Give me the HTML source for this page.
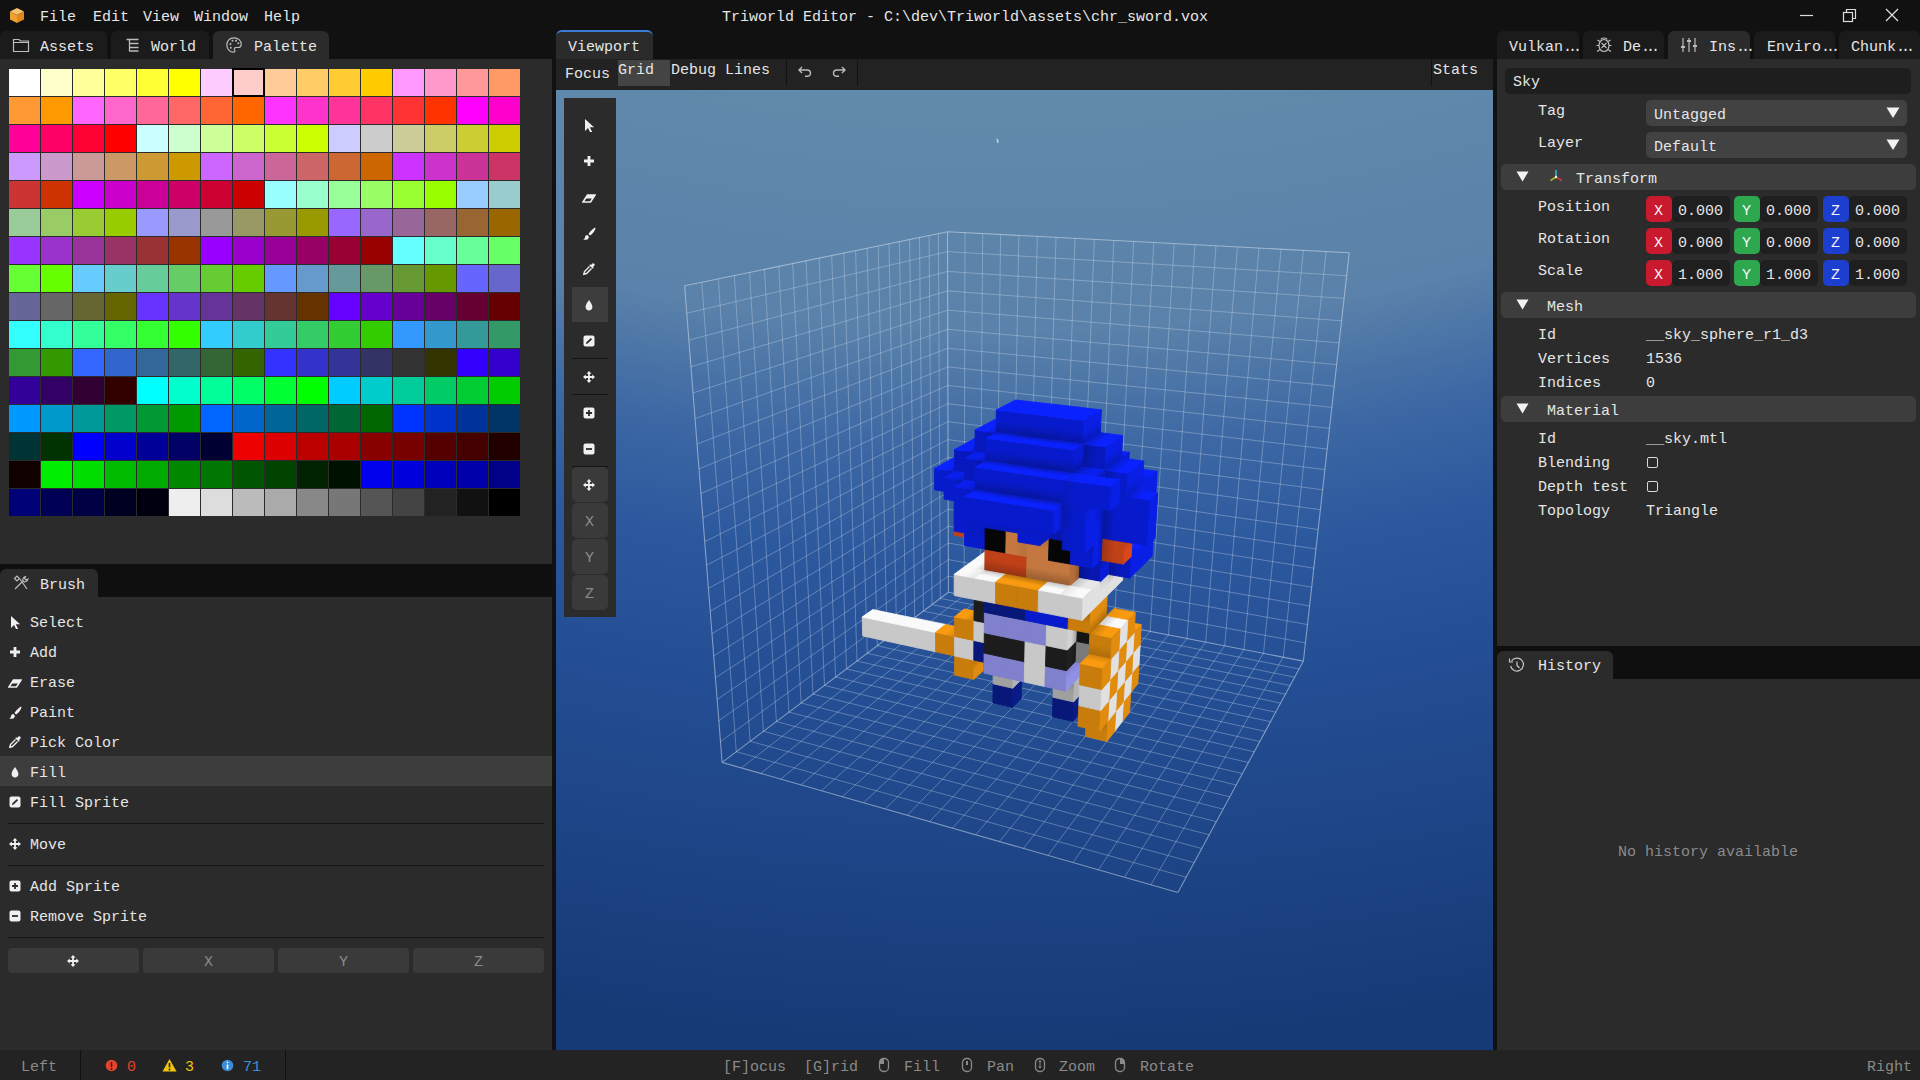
<!DOCTYPE html>
<html><head><meta charset="utf-8"><style>
html,body{margin:0;padding:0;width:1920px;height:1080px;overflow:hidden;background:#111111}
body>div,body>svg{position:absolute}
div{position:absolute}
.t{font:15px/20px "Liberation Mono",monospace;white-space:pre}
</style></head><body>
<svg style="position:absolute;left:9px;top:7px;" width="16" height="17" viewBox="0 0 16 17"><polygon points="8,1 15,4.5 8,8 1,4.5" fill="#f7c26a"/><polygon points="1,4.5 8,8 8,16 1,12.5" fill="#f0a030"/><polygon points="15,4.5 8,8 8,16 15,12.5" fill="#e08a18"/></svg>
<div class="t" style="left:40px;top:8px;color:#e6e6e6;">File</div>
<div class="t" style="left:93px;top:8px;color:#e6e6e6;">Edit</div>
<div class="t" style="left:143px;top:8px;color:#e6e6e6;">View</div>
<div class="t" style="left:194px;top:8px;color:#e6e6e6;">Window</div>
<div class="t" style="left:264px;top:8px;color:#e6e6e6;">Help</div>
<div class="t" style="left:722px;top:8px;color:#e6e6e6;">Triworld Editor - C:\dev\Triworld\assets\chr_sword.vox</div>
<svg style="position:absolute;left:1796px;top:6px;" width="20" height="20" viewBox="0 0 20 20"><line x1="4" y1="9.5" x2="17" y2="9.5" stroke="#ddd" stroke-width="1.2"/></svg>
<svg style="position:absolute;left:1839px;top:6px;" width="20" height="20" viewBox="0 0 20 20"><rect x="4.5" y="6.5" width="9" height="9" fill="none" stroke="#ddd" stroke-width="1.2"/><path d="M7.5 6.5 V3.5 H16.5 V12.5 H13.5" fill="none" stroke="#ddd" stroke-width="1.2"/></svg>
<svg style="position:absolute;left:1882px;top:6px;" width="20" height="20" viewBox="0 0 20 20"><path d="M4 3 L16 15 M16 3 L4 15" stroke="#ddd" stroke-width="1.3"/></svg>
<div style="left:0px;top:31px;width:107px;height:28px;background:#1b1b1b;border-radius:6px 6px 0 0;"></div>
<div style="left:111px;top:31px;width:98px;height:28px;background:#1b1b1b;border-radius:6px 6px 0 0;"></div>
<div style="left:213px;top:31px;width:116px;height:28px;background:#2b2b2b;border-radius:6px 6px 0 0;"></div>
<div style="left:0px;top:59px;width:552px;height:505px;background:#2b2b2b;"></div>
<svg style="position:absolute;left:12px;top:36px;" width="18" height="18" viewBox="0 0 18 18"><path d="M1.5 3.5 H7 L8.5 5 H16.5 V15.5 H1.5 Z M1.5 6.5 H16.5" fill="none" stroke="#bdbdbd" stroke-width="1.2"/></svg>
<div class="t" style="left:40px;top:38px;color:#e6e6e6;">Assets</div>
<svg style="position:absolute;left:124px;top:36px;" width="18" height="18" viewBox="0 0 18 18"><path d="M2.5 3.5 H14.5 M5.5 3.5 V15.5 M5.5 7.5 H14.5 M5.5 11.5 H14.5 M5.5 15 H14.5" fill="none" stroke="#bdbdbd" stroke-width="1.3"/></svg>
<div class="t" style="left:151px;top:38px;color:#e6e6e6;">World</div>
<svg style="position:absolute;left:225px;top:36px;" width="18" height="18" viewBox="0 0 18 18"><path d="M9 1.8 C4.5 1.8 1.8 5 1.8 9 C1.8 13 5 16.2 8.5 16.2 C10 16.2 10.3 15 9.6 14 C8.8 12.8 9.5 11.5 11 11.5 H13 C15 11.5 16.2 10.2 16.2 8.2 C16.2 4.6 13 1.8 9 1.8 Z" fill="none" stroke="#bdbdbd" stroke-width="1.2"/><circle cx="5.5" cy="8" r="1" fill="#bdbdbd"/><circle cx="7.5" cy="4.8" r="1" fill="#bdbdbd"/><circle cx="11" cy="4.8" r="1" fill="#bdbdbd"/><circle cx="13.3" cy="7.3" r="1" fill="#bdbdbd"/><circle cx="5.8" cy="11.8" r="1" fill="#bdbdbd"/></svg>
<div class="t" style="left:254px;top:38px;color:#e6e6e6;">Palette</div>
<div style="left:9px;top:69px;width:31px;height:27px;background:rgb(255,255,255)"></div><div style="left:41px;top:69px;width:31px;height:27px;background:rgb(255,255,204)"></div><div style="left:73px;top:69px;width:31px;height:27px;background:rgb(255,255,153)"></div><div style="left:105px;top:69px;width:31px;height:27px;background:rgb(255,255,102)"></div><div style="left:137px;top:69px;width:31px;height:27px;background:rgb(255,255,51)"></div><div style="left:169px;top:69px;width:31px;height:27px;background:rgb(255,255,0)"></div><div style="left:201px;top:69px;width:31px;height:27px;background:rgb(255,204,255)"></div><div style="left:233px;top:69px;width:31px;height:27px;background:rgb(255,204,204)"></div><div style="left:265px;top:69px;width:31px;height:27px;background:rgb(255,204,153)"></div><div style="left:297px;top:69px;width:31px;height:27px;background:rgb(255,204,102)"></div><div style="left:329px;top:69px;width:31px;height:27px;background:rgb(255,204,51)"></div><div style="left:361px;top:69px;width:31px;height:27px;background:rgb(255,204,0)"></div><div style="left:393px;top:69px;width:31px;height:27px;background:rgb(255,153,255)"></div><div style="left:425px;top:69px;width:31px;height:27px;background:rgb(255,153,204)"></div><div style="left:457px;top:69px;width:31px;height:27px;background:rgb(255,153,153)"></div><div style="left:489px;top:69px;width:31px;height:27px;background:rgb(255,153,102)"></div><div style="left:9px;top:97px;width:31px;height:27px;background:rgb(255,153,51)"></div><div style="left:41px;top:97px;width:31px;height:27px;background:rgb(255,153,0)"></div><div style="left:73px;top:97px;width:31px;height:27px;background:rgb(255,102,255)"></div><div style="left:105px;top:97px;width:31px;height:27px;background:rgb(255,102,204)"></div><div style="left:137px;top:97px;width:31px;height:27px;background:rgb(255,102,153)"></div><div style="left:169px;top:97px;width:31px;height:27px;background:rgb(255,102,102)"></div><div style="left:201px;top:97px;width:31px;height:27px;background:rgb(255,102,51)"></div><div style="left:233px;top:97px;width:31px;height:27px;background:rgb(255,102,0)"></div><div style="left:265px;top:97px;width:31px;height:27px;background:rgb(255,51,255)"></div><div style="left:297px;top:97px;width:31px;height:27px;background:rgb(255,51,204)"></div><div style="left:329px;top:97px;width:31px;height:27px;background:rgb(255,51,153)"></div><div style="left:361px;top:97px;width:31px;height:27px;background:rgb(255,51,102)"></div><div style="left:393px;top:97px;width:31px;height:27px;background:rgb(255,51,51)"></div><div style="left:425px;top:97px;width:31px;height:27px;background:rgb(255,51,0)"></div><div style="left:457px;top:97px;width:31px;height:27px;background:rgb(255,0,255)"></div><div style="left:489px;top:97px;width:31px;height:27px;background:rgb(255,0,204)"></div><div style="left:9px;top:125px;width:31px;height:27px;background:rgb(255,0,153)"></div><div style="left:41px;top:125px;width:31px;height:27px;background:rgb(255,0,102)"></div><div style="left:73px;top:125px;width:31px;height:27px;background:rgb(255,0,51)"></div><div style="left:105px;top:125px;width:31px;height:27px;background:rgb(255,0,0)"></div><div style="left:137px;top:125px;width:31px;height:27px;background:rgb(204,255,255)"></div><div style="left:169px;top:125px;width:31px;height:27px;background:rgb(204,255,204)"></div><div style="left:201px;top:125px;width:31px;height:27px;background:rgb(204,255,153)"></div><div style="left:233px;top:125px;width:31px;height:27px;background:rgb(204,255,102)"></div><div style="left:265px;top:125px;width:31px;height:27px;background:rgb(204,255,51)"></div><div style="left:297px;top:125px;width:31px;height:27px;background:rgb(204,255,0)"></div><div style="left:329px;top:125px;width:31px;height:27px;background:rgb(204,204,255)"></div><div style="left:361px;top:125px;width:31px;height:27px;background:rgb(204,204,204)"></div><div style="left:393px;top:125px;width:31px;height:27px;background:rgb(204,204,153)"></div><div style="left:425px;top:125px;width:31px;height:27px;background:rgb(204,204,102)"></div><div style="left:457px;top:125px;width:31px;height:27px;background:rgb(204,204,51)"></div><div style="left:489px;top:125px;width:31px;height:27px;background:rgb(204,204,0)"></div><div style="left:9px;top:153px;width:31px;height:27px;background:rgb(204,153,255)"></div><div style="left:41px;top:153px;width:31px;height:27px;background:rgb(204,153,204)"></div><div style="left:73px;top:153px;width:31px;height:27px;background:rgb(204,153,153)"></div><div style="left:105px;top:153px;width:31px;height:27px;background:rgb(204,153,102)"></div><div style="left:137px;top:153px;width:31px;height:27px;background:rgb(204,153,51)"></div><div style="left:169px;top:153px;width:31px;height:27px;background:rgb(204,153,0)"></div><div style="left:201px;top:153px;width:31px;height:27px;background:rgb(204,102,255)"></div><div style="left:233px;top:153px;width:31px;height:27px;background:rgb(204,102,204)"></div><div style="left:265px;top:153px;width:31px;height:27px;background:rgb(204,102,153)"></div><div style="left:297px;top:153px;width:31px;height:27px;background:rgb(204,102,102)"></div><div style="left:329px;top:153px;width:31px;height:27px;background:rgb(204,102,51)"></div><div style="left:361px;top:153px;width:31px;height:27px;background:rgb(204,102,0)"></div><div style="left:393px;top:153px;width:31px;height:27px;background:rgb(204,51,255)"></div><div style="left:425px;top:153px;width:31px;height:27px;background:rgb(204,51,204)"></div><div style="left:457px;top:153px;width:31px;height:27px;background:rgb(204,51,153)"></div><div style="left:489px;top:153px;width:31px;height:27px;background:rgb(204,51,102)"></div><div style="left:9px;top:181px;width:31px;height:27px;background:rgb(204,51,51)"></div><div style="left:41px;top:181px;width:31px;height:27px;background:rgb(204,51,0)"></div><div style="left:73px;top:181px;width:31px;height:27px;background:rgb(204,0,255)"></div><div style="left:105px;top:181px;width:31px;height:27px;background:rgb(204,0,204)"></div><div style="left:137px;top:181px;width:31px;height:27px;background:rgb(204,0,153)"></div><div style="left:169px;top:181px;width:31px;height:27px;background:rgb(204,0,102)"></div><div style="left:201px;top:181px;width:31px;height:27px;background:rgb(204,0,51)"></div><div style="left:233px;top:181px;width:31px;height:27px;background:rgb(204,0,0)"></div><div style="left:265px;top:181px;width:31px;height:27px;background:rgb(153,255,255)"></div><div style="left:297px;top:181px;width:31px;height:27px;background:rgb(153,255,204)"></div><div style="left:329px;top:181px;width:31px;height:27px;background:rgb(153,255,153)"></div><div style="left:361px;top:181px;width:31px;height:27px;background:rgb(153,255,102)"></div><div style="left:393px;top:181px;width:31px;height:27px;background:rgb(153,255,51)"></div><div style="left:425px;top:181px;width:31px;height:27px;background:rgb(153,255,0)"></div><div style="left:457px;top:181px;width:31px;height:27px;background:rgb(153,204,255)"></div><div style="left:489px;top:181px;width:31px;height:27px;background:rgb(153,204,204)"></div><div style="left:9px;top:209px;width:31px;height:27px;background:rgb(153,204,153)"></div><div style="left:41px;top:209px;width:31px;height:27px;background:rgb(153,204,102)"></div><div style="left:73px;top:209px;width:31px;height:27px;background:rgb(153,204,51)"></div><div style="left:105px;top:209px;width:31px;height:27px;background:rgb(153,204,0)"></div><div style="left:137px;top:209px;width:31px;height:27px;background:rgb(153,153,255)"></div><div style="left:169px;top:209px;width:31px;height:27px;background:rgb(153,153,204)"></div><div style="left:201px;top:209px;width:31px;height:27px;background:rgb(153,153,153)"></div><div style="left:233px;top:209px;width:31px;height:27px;background:rgb(153,153,102)"></div><div style="left:265px;top:209px;width:31px;height:27px;background:rgb(153,153,51)"></div><div style="left:297px;top:209px;width:31px;height:27px;background:rgb(153,153,0)"></div><div style="left:329px;top:209px;width:31px;height:27px;background:rgb(153,102,255)"></div><div style="left:361px;top:209px;width:31px;height:27px;background:rgb(153,102,204)"></div><div style="left:393px;top:209px;width:31px;height:27px;background:rgb(153,102,153)"></div><div style="left:425px;top:209px;width:31px;height:27px;background:rgb(153,102,102)"></div><div style="left:457px;top:209px;width:31px;height:27px;background:rgb(153,102,51)"></div><div style="left:489px;top:209px;width:31px;height:27px;background:rgb(153,102,0)"></div><div style="left:9px;top:237px;width:31px;height:27px;background:rgb(153,51,255)"></div><div style="left:41px;top:237px;width:31px;height:27px;background:rgb(153,51,204)"></div><div style="left:73px;top:237px;width:31px;height:27px;background:rgb(153,51,153)"></div><div style="left:105px;top:237px;width:31px;height:27px;background:rgb(153,51,102)"></div><div style="left:137px;top:237px;width:31px;height:27px;background:rgb(153,51,51)"></div><div style="left:169px;top:237px;width:31px;height:27px;background:rgb(153,51,0)"></div><div style="left:201px;top:237px;width:31px;height:27px;background:rgb(153,0,255)"></div><div style="left:233px;top:237px;width:31px;height:27px;background:rgb(153,0,204)"></div><div style="left:265px;top:237px;width:31px;height:27px;background:rgb(153,0,153)"></div><div style="left:297px;top:237px;width:31px;height:27px;background:rgb(153,0,102)"></div><div style="left:329px;top:237px;width:31px;height:27px;background:rgb(153,0,51)"></div><div style="left:361px;top:237px;width:31px;height:27px;background:rgb(153,0,0)"></div><div style="left:393px;top:237px;width:31px;height:27px;background:rgb(102,255,255)"></div><div style="left:425px;top:237px;width:31px;height:27px;background:rgb(102,255,204)"></div><div style="left:457px;top:237px;width:31px;height:27px;background:rgb(102,255,153)"></div><div style="left:489px;top:237px;width:31px;height:27px;background:rgb(102,255,102)"></div><div style="left:9px;top:265px;width:31px;height:27px;background:rgb(102,255,51)"></div><div style="left:41px;top:265px;width:31px;height:27px;background:rgb(102,255,0)"></div><div style="left:73px;top:265px;width:31px;height:27px;background:rgb(102,204,255)"></div><div style="left:105px;top:265px;width:31px;height:27px;background:rgb(102,204,204)"></div><div style="left:137px;top:265px;width:31px;height:27px;background:rgb(102,204,153)"></div><div style="left:169px;top:265px;width:31px;height:27px;background:rgb(102,204,102)"></div><div style="left:201px;top:265px;width:31px;height:27px;background:rgb(102,204,51)"></div><div style="left:233px;top:265px;width:31px;height:27px;background:rgb(102,204,0)"></div><div style="left:265px;top:265px;width:31px;height:27px;background:rgb(102,153,255)"></div><div style="left:297px;top:265px;width:31px;height:27px;background:rgb(102,153,204)"></div><div style="left:329px;top:265px;width:31px;height:27px;background:rgb(102,153,153)"></div><div style="left:361px;top:265px;width:31px;height:27px;background:rgb(102,153,102)"></div><div style="left:393px;top:265px;width:31px;height:27px;background:rgb(102,153,51)"></div><div style="left:425px;top:265px;width:31px;height:27px;background:rgb(102,153,0)"></div><div style="left:457px;top:265px;width:31px;height:27px;background:rgb(102,102,255)"></div><div style="left:489px;top:265px;width:31px;height:27px;background:rgb(102,102,204)"></div><div style="left:9px;top:293px;width:31px;height:27px;background:rgb(102,102,153)"></div><div style="left:41px;top:293px;width:31px;height:27px;background:rgb(102,102,102)"></div><div style="left:73px;top:293px;width:31px;height:27px;background:rgb(102,102,51)"></div><div style="left:105px;top:293px;width:31px;height:27px;background:rgb(102,102,0)"></div><div style="left:137px;top:293px;width:31px;height:27px;background:rgb(102,51,255)"></div><div style="left:169px;top:293px;width:31px;height:27px;background:rgb(102,51,204)"></div><div style="left:201px;top:293px;width:31px;height:27px;background:rgb(102,51,153)"></div><div style="left:233px;top:293px;width:31px;height:27px;background:rgb(102,51,102)"></div><div style="left:265px;top:293px;width:31px;height:27px;background:rgb(102,51,51)"></div><div style="left:297px;top:293px;width:31px;height:27px;background:rgb(102,51,0)"></div><div style="left:329px;top:293px;width:31px;height:27px;background:rgb(102,0,255)"></div><div style="left:361px;top:293px;width:31px;height:27px;background:rgb(102,0,204)"></div><div style="left:393px;top:293px;width:31px;height:27px;background:rgb(102,0,153)"></div><div style="left:425px;top:293px;width:31px;height:27px;background:rgb(102,0,102)"></div><div style="left:457px;top:293px;width:31px;height:27px;background:rgb(102,0,51)"></div><div style="left:489px;top:293px;width:31px;height:27px;background:rgb(102,0,0)"></div><div style="left:9px;top:321px;width:31px;height:27px;background:rgb(51,255,255)"></div><div style="left:41px;top:321px;width:31px;height:27px;background:rgb(51,255,204)"></div><div style="left:73px;top:321px;width:31px;height:27px;background:rgb(51,255,153)"></div><div style="left:105px;top:321px;width:31px;height:27px;background:rgb(51,255,102)"></div><div style="left:137px;top:321px;width:31px;height:27px;background:rgb(51,255,51)"></div><div style="left:169px;top:321px;width:31px;height:27px;background:rgb(51,255,0)"></div><div style="left:201px;top:321px;width:31px;height:27px;background:rgb(51,204,255)"></div><div style="left:233px;top:321px;width:31px;height:27px;background:rgb(51,204,204)"></div><div style="left:265px;top:321px;width:31px;height:27px;background:rgb(51,204,153)"></div><div style="left:297px;top:321px;width:31px;height:27px;background:rgb(51,204,102)"></div><div style="left:329px;top:321px;width:31px;height:27px;background:rgb(51,204,51)"></div><div style="left:361px;top:321px;width:31px;height:27px;background:rgb(51,204,0)"></div><div style="left:393px;top:321px;width:31px;height:27px;background:rgb(51,153,255)"></div><div style="left:425px;top:321px;width:31px;height:27px;background:rgb(51,153,204)"></div><div style="left:457px;top:321px;width:31px;height:27px;background:rgb(51,153,153)"></div><div style="left:489px;top:321px;width:31px;height:27px;background:rgb(51,153,102)"></div><div style="left:9px;top:349px;width:31px;height:27px;background:rgb(51,153,51)"></div><div style="left:41px;top:349px;width:31px;height:27px;background:rgb(51,153,0)"></div><div style="left:73px;top:349px;width:31px;height:27px;background:rgb(51,102,255)"></div><div style="left:105px;top:349px;width:31px;height:27px;background:rgb(51,102,204)"></div><div style="left:137px;top:349px;width:31px;height:27px;background:rgb(51,102,153)"></div><div style="left:169px;top:349px;width:31px;height:27px;background:rgb(51,102,102)"></div><div style="left:201px;top:349px;width:31px;height:27px;background:rgb(51,102,51)"></div><div style="left:233px;top:349px;width:31px;height:27px;background:rgb(51,102,0)"></div><div style="left:265px;top:349px;width:31px;height:27px;background:rgb(51,51,255)"></div><div style="left:297px;top:349px;width:31px;height:27px;background:rgb(51,51,204)"></div><div style="left:329px;top:349px;width:31px;height:27px;background:rgb(51,51,153)"></div><div style="left:361px;top:349px;width:31px;height:27px;background:rgb(51,51,102)"></div><div style="left:393px;top:349px;width:31px;height:27px;background:rgb(51,51,51)"></div><div style="left:425px;top:349px;width:31px;height:27px;background:rgb(51,51,0)"></div><div style="left:457px;top:349px;width:31px;height:27px;background:rgb(51,0,255)"></div><div style="left:489px;top:349px;width:31px;height:27px;background:rgb(51,0,204)"></div><div style="left:9px;top:377px;width:31px;height:27px;background:rgb(51,0,153)"></div><div style="left:41px;top:377px;width:31px;height:27px;background:rgb(51,0,102)"></div><div style="left:73px;top:377px;width:31px;height:27px;background:rgb(51,0,51)"></div><div style="left:105px;top:377px;width:31px;height:27px;background:rgb(51,0,0)"></div><div style="left:137px;top:377px;width:31px;height:27px;background:rgb(0,255,255)"></div><div style="left:169px;top:377px;width:31px;height:27px;background:rgb(0,255,204)"></div><div style="left:201px;top:377px;width:31px;height:27px;background:rgb(0,255,153)"></div><div style="left:233px;top:377px;width:31px;height:27px;background:rgb(0,255,102)"></div><div style="left:265px;top:377px;width:31px;height:27px;background:rgb(0,255,51)"></div><div style="left:297px;top:377px;width:31px;height:27px;background:rgb(0,255,0)"></div><div style="left:329px;top:377px;width:31px;height:27px;background:rgb(0,204,255)"></div><div style="left:361px;top:377px;width:31px;height:27px;background:rgb(0,204,204)"></div><div style="left:393px;top:377px;width:31px;height:27px;background:rgb(0,204,153)"></div><div style="left:425px;top:377px;width:31px;height:27px;background:rgb(0,204,102)"></div><div style="left:457px;top:377px;width:31px;height:27px;background:rgb(0,204,51)"></div><div style="left:489px;top:377px;width:31px;height:27px;background:rgb(0,204,0)"></div><div style="left:9px;top:405px;width:31px;height:27px;background:rgb(0,153,255)"></div><div style="left:41px;top:405px;width:31px;height:27px;background:rgb(0,153,204)"></div><div style="left:73px;top:405px;width:31px;height:27px;background:rgb(0,153,153)"></div><div style="left:105px;top:405px;width:31px;height:27px;background:rgb(0,153,102)"></div><div style="left:137px;top:405px;width:31px;height:27px;background:rgb(0,153,51)"></div><div style="left:169px;top:405px;width:31px;height:27px;background:rgb(0,153,0)"></div><div style="left:201px;top:405px;width:31px;height:27px;background:rgb(0,102,255)"></div><div style="left:233px;top:405px;width:31px;height:27px;background:rgb(0,102,204)"></div><div style="left:265px;top:405px;width:31px;height:27px;background:rgb(0,102,153)"></div><div style="left:297px;top:405px;width:31px;height:27px;background:rgb(0,102,102)"></div><div style="left:329px;top:405px;width:31px;height:27px;background:rgb(0,102,51)"></div><div style="left:361px;top:405px;width:31px;height:27px;background:rgb(0,102,0)"></div><div style="left:393px;top:405px;width:31px;height:27px;background:rgb(0,51,255)"></div><div style="left:425px;top:405px;width:31px;height:27px;background:rgb(0,51,204)"></div><div style="left:457px;top:405px;width:31px;height:27px;background:rgb(0,51,153)"></div><div style="left:489px;top:405px;width:31px;height:27px;background:rgb(0,51,102)"></div><div style="left:9px;top:433px;width:31px;height:27px;background:rgb(0,51,51)"></div><div style="left:41px;top:433px;width:31px;height:27px;background:rgb(0,51,0)"></div><div style="left:73px;top:433px;width:31px;height:27px;background:rgb(0,0,255)"></div><div style="left:105px;top:433px;width:31px;height:27px;background:rgb(0,0,204)"></div><div style="left:137px;top:433px;width:31px;height:27px;background:rgb(0,0,153)"></div><div style="left:169px;top:433px;width:31px;height:27px;background:rgb(0,0,102)"></div><div style="left:201px;top:433px;width:31px;height:27px;background:rgb(0,0,51)"></div><div style="left:233px;top:433px;width:31px;height:27px;background:rgb(238,0,0)"></div><div style="left:265px;top:433px;width:31px;height:27px;background:rgb(221,0,0)"></div><div style="left:297px;top:433px;width:31px;height:27px;background:rgb(187,0,0)"></div><div style="left:329px;top:433px;width:31px;height:27px;background:rgb(170,0,0)"></div><div style="left:361px;top:433px;width:31px;height:27px;background:rgb(136,0,0)"></div><div style="left:393px;top:433px;width:31px;height:27px;background:rgb(119,0,0)"></div><div style="left:425px;top:433px;width:31px;height:27px;background:rgb(85,0,0)"></div><div style="left:457px;top:433px;width:31px;height:27px;background:rgb(68,0,0)"></div><div style="left:489px;top:433px;width:31px;height:27px;background:rgb(34,0,0)"></div><div style="left:9px;top:461px;width:31px;height:27px;background:rgb(17,0,0)"></div><div style="left:41px;top:461px;width:31px;height:27px;background:rgb(0,238,0)"></div><div style="left:73px;top:461px;width:31px;height:27px;background:rgb(0,221,0)"></div><div style="left:105px;top:461px;width:31px;height:27px;background:rgb(0,187,0)"></div><div style="left:137px;top:461px;width:31px;height:27px;background:rgb(0,170,0)"></div><div style="left:169px;top:461px;width:31px;height:27px;background:rgb(0,136,0)"></div><div style="left:201px;top:461px;width:31px;height:27px;background:rgb(0,119,0)"></div><div style="left:233px;top:461px;width:31px;height:27px;background:rgb(0,85,0)"></div><div style="left:265px;top:461px;width:31px;height:27px;background:rgb(0,68,0)"></div><div style="left:297px;top:461px;width:31px;height:27px;background:rgb(0,34,0)"></div><div style="left:329px;top:461px;width:31px;height:27px;background:rgb(0,17,0)"></div><div style="left:361px;top:461px;width:31px;height:27px;background:rgb(0,0,238)"></div><div style="left:393px;top:461px;width:31px;height:27px;background:rgb(0,0,221)"></div><div style="left:425px;top:461px;width:31px;height:27px;background:rgb(0,0,187)"></div><div style="left:457px;top:461px;width:31px;height:27px;background:rgb(0,0,170)"></div><div style="left:489px;top:461px;width:31px;height:27px;background:rgb(0,0,136)"></div><div style="left:9px;top:489px;width:31px;height:27px;background:rgb(0,0,119)"></div><div style="left:41px;top:489px;width:31px;height:27px;background:rgb(0,0,85)"></div><div style="left:73px;top:489px;width:31px;height:27px;background:rgb(0,0,68)"></div><div style="left:105px;top:489px;width:31px;height:27px;background:rgb(0,0,34)"></div><div style="left:137px;top:489px;width:31px;height:27px;background:rgb(0,0,17)"></div><div style="left:169px;top:489px;width:31px;height:27px;background:rgb(238,238,238)"></div><div style="left:201px;top:489px;width:31px;height:27px;background:rgb(221,221,221)"></div><div style="left:233px;top:489px;width:31px;height:27px;background:rgb(187,187,187)"></div><div style="left:265px;top:489px;width:31px;height:27px;background:rgb(170,170,170)"></div><div style="left:297px;top:489px;width:31px;height:27px;background:rgb(136,136,136)"></div><div style="left:329px;top:489px;width:31px;height:27px;background:rgb(119,119,119)"></div><div style="left:361px;top:489px;width:31px;height:27px;background:rgb(85,85,85)"></div><div style="left:393px;top:489px;width:31px;height:27px;background:rgb(68,68,68)"></div><div style="left:425px;top:489px;width:31px;height:27px;background:rgb(34,34,34)"></div><div style="left:457px;top:489px;width:31px;height:27px;background:rgb(17,17,17)"></div><div style="left:489px;top:489px;width:31px;height:27px;background:rgb(0,0,0)"></div>
<div style="left:232px;top:68px;width:33px;height:29px;box-sizing:border-box;border:2px solid #000"></div>
<div style="left:0px;top:564px;width:552px;height:33px;background:#0f0f0f;"></div>
<div style="left:0px;top:569px;width:98px;height:28px;background:#2b2b2b;border-radius:6px 6px 0 0;"></div>
<div style="left:0px;top:597px;width:552px;height:453px;background:#2b2b2b;"></div>
<svg style="position:absolute;left:12px;top:574px;" width="18" height="18" viewBox="0 0 18 18"><path d="M3 15 L10.5 7.5 M8 5 L15 15 M2.5 4.5 L5 2 L7.5 4.5 L5 7 Z M11.5 7.5 C10 6 11 3 13.5 2.5 L12.5 4.5 L14 6 L16 5 C15.5 7.5 13 8.5 11.5 7.5 Z" fill="none" stroke="#bdbdbd" stroke-width="1.2"/></svg>
<div class="t" style="left:40px;top:576px;color:#e6e6e6;">Brush</div>
<div style="left:0px;top:756px;width:552px;height:30px;background:#3d3d3d;"></div>
<svg style="position:absolute;left:8px;top:615px;" width="14" height="14" viewBox="0 0 14 14"><path d="M3 1 L3 13 L6 10 L8.5 15 L10.3 14.2 L7.8 9.3 L12 9.3 Z" fill="#f0f0f0"/></svg>
<div class="t" style="left:30px;top:614px;color:#e6e6e6;">Select</div>
<svg style="position:absolute;left:8px;top:645px;" width="14" height="14" viewBox="0 0 14 14"><path d="M7 2 V12 M2 7 H12" stroke="#f0f0f0" stroke-width="2.8"/></svg>
<div class="t" style="left:30px;top:644px;color:#e6e6e6;">Add</div>
<svg style="position:absolute;left:8px;top:675px;" width="14" height="14" viewBox="0 0 14 14"><path d="M1 12 L5.5 5 H13 L8.5 12 Z" fill="none" stroke="#f0f0f0" stroke-width="1.6"/><path d="M3.2 8.6 L5.5 5 H13 L10.7 8.6 Z" fill="#f0f0f0"/></svg>
<div class="t" style="left:30px;top:674px;color:#e6e6e6;">Erase</div>
<svg style="position:absolute;left:8px;top:705px;" width="14" height="14" viewBox="0 0 14 14"><path d="M13 1.5 C11 2.5 7.5 6 6.5 8 L8 9.5 C10 8.5 13 5 13.5 2 Z" fill="#f0f0f0"/><path d="M5.5 9 C3.5 9 3 10.5 2.8 12 C2.6 13 1.8 13.2 1 13.2 C3 14.5 6.5 14 7 11 Z" fill="#f0f0f0"/></svg>
<div class="t" style="left:30px;top:704px;color:#e6e6e6;">Paint</div>
<svg style="position:absolute;left:8px;top:735px;" width="14" height="14" viewBox="0 0 14 14"><path d="M10.5 1.5 C11.5 0.5 13.5 2.5 12.5 3.5 L11 5 L11.8 5.8 L10.8 6.8 L7.2 3.2 L8.2 2.2 L9 3 Z" fill="#f0f0f0"/><path d="M7.5 4.5 L2.5 9.5 L1.8 12.2 L4.5 11.5 L9.5 6.5" fill="none" stroke="#f0f0f0" stroke-width="1.4"/></svg>
<div class="t" style="left:30px;top:734px;color:#e6e6e6;">Pick Color</div>
<svg style="position:absolute;left:8px;top:765px;" width="14" height="14" viewBox="0 0 14 14"><path d="M7 2 C5 5 3.6 6.8 3.6 9 C3.6 11 5.2 12.5 7 12.5 C8.8 12.5 10.4 11 10.4 9 C10.4 6.8 9 5 7 2 Z" fill="#f0f0f0"/></svg>
<div class="t" style="left:30px;top:764px;color:#e6e6e6;">Fill</div>
<svg style="position:absolute;left:8px;top:795px;" width="14" height="14" viewBox="0 0 14 14"><rect x="1.5" y="1.5" width="11" height="11" rx="2" fill="#f0f0f0"/><path d="M4 10 L4.4 8.3 L8.8 3.9 L10.1 5.2 L5.7 9.6 Z" fill="#2b2b2b"/></svg>
<div class="t" style="left:30px;top:794px;color:#e6e6e6;">Fill Sprite</div>
<svg style="position:absolute;left:8px;top:837px;" width="14" height="14" viewBox="0 0 14 14"><path d="M7 1 L9.5 3.8 H7.9 V6.1 H10.2 V4.5 L13 7 L10.2 9.5 V7.9 H7.9 V10.2 H9.5 L7 13 L4.5 10.2 H6.1 V7.9 H3.8 V9.5 L1 7 L3.8 4.5 V6.1 H6.1 V3.8 H4.5 Z" fill="#f0f0f0"/></svg>
<div class="t" style="left:30px;top:836px;color:#e6e6e6;">Move</div>
<svg style="position:absolute;left:8px;top:879px;" width="14" height="14" viewBox="0 0 14 14"><rect x="1.5" y="1.5" width="11" height="11" rx="2" fill="#f0f0f0"/><path d="M7 4 V10 M4 7 H10" stroke="#2b2b2b" stroke-width="1.8"/></svg>
<div class="t" style="left:30px;top:878px;color:#e6e6e6;">Add Sprite</div>
<svg style="position:absolute;left:8px;top:909px;" width="14" height="14" viewBox="0 0 14 14"><rect x="1.5" y="1.5" width="11" height="11" rx="2" fill="#f0f0f0"/><path d="M4 7 H10" stroke="#2b2b2b" stroke-width="1.8"/></svg>
<div class="t" style="left:30px;top:908px;color:#e6e6e6;">Remove Sprite</div>
<div style="left:8px;top:823px;width:536px;height:1px;background:#141414;"></div>
<div style="left:8px;top:865px;width:536px;height:1px;background:#141414;"></div>
<div style="left:8px;top:937px;width:536px;height:1px;background:#141414;"></div>
<div style="left:8px;top:948px;width:131px;height:25px;background:#3a3a3a;border-radius:4px"></div>
<div style="left:143px;top:948px;width:131px;height:25px;background:#3a3a3a;border-radius:4px"></div>
<div class="t" style="left:204px;top:953px;color:#8c8c8c;">X</div>
<div style="left:278px;top:948px;width:131px;height:25px;background:#3a3a3a;border-radius:4px"></div>
<div class="t" style="left:339px;top:953px;color:#8c8c8c;">Y</div>
<div style="left:413px;top:948px;width:131px;height:25px;background:#3a3a3a;border-radius:4px"></div>
<div class="t" style="left:474px;top:953px;color:#8c8c8c;">Z</div>
<svg style="position:absolute;left:66px;top:954px;" width="14" height="14" viewBox="0 0 14 14"><path d="M7 1 L9.5 3.8 H7.9 V6.1 H10.2 V4.5 L13 7 L10.2 9.5 V7.9 H7.9 V10.2 H9.5 L7 13 L4.5 10.2 H6.1 V7.9 H3.8 V9.5 L1 7 L3.8 4.5 V6.1 H6.1 V3.8 H4.5 Z" fill="#f0f0f0"/></svg>
<div style="left:556px;top:30px;width:97px;height:29px;background:#2b2b2b;border-radius:6px 6px 0 0;"></div>
<div style="left:556px;top:30px;width:97px;height:29px;border-top:2px solid #3a7bd5;border-radius:6px 6px 0 0;box-sizing:border-box"></div>
<div class="t" style="left:568px;top:38px;color:#e6e6e6;">Viewport</div>
<div style="left:556px;top:59px;width:937px;height:31px;background:#222222;"></div>
<div style="left:618px;top:60px;width:52px;height:26px;background:#444444;"></div>
<div class="t" style="left:565px;top:65px;color:#e6e6e6;">Focus</div>
<div class="t" style="left:618px;top:61px;color:#e6e6e6;">Grid</div>
<div class="t" style="left:671px;top:61px;color:#e6e6e6;">Debug Lines</div>
<div style="left:786px;top:60px;width:1px;height:26px;background:#111111;"></div>
<div style="left:857px;top:60px;width:1px;height:26px;background:#111111;"></div>
<div style="left:1431px;top:60px;width:1px;height:26px;background:#111111;"></div>
<svg style="position:absolute;left:797px;top:63px;" width="16" height="16" viewBox="0 0 16 16"><path d="M5 4 L2 7 L5 10 M2.5 7 H10 C12.2 7 13.5 8.5 13.5 10.3 C13.5 12 12.2 13.3 10 13.3 H8" fill="none" stroke="#bbb" stroke-width="1.4"/></svg>
<svg style="position:absolute;left:831px;top:63px;" width="16" height="16" viewBox="0 0 16 16"><path d="M11 4 L14 7 L11 10 M13.5 7 H6 C3.8 7 2.5 8.5 2.5 10.3 C2.5 12 3.8 13.3 6 13.3 H8" fill="none" stroke="#bbb" stroke-width="1.4"/></svg>
<div class="t" style="left:1433px;top:61px;color:#e6e6e6;">Stats</div>
<svg style="position:absolute;left:556px;top:90px" width="937" height="960" viewBox="0 0 937 960"><defs><radialGradient id="sky" gradientUnits="userSpaceOnUse" cx="454" cy="-1500" r="2600"><stop offset="0.577" stop-color="#628aac"/><stop offset="0.669" stop-color="#5a82aa"/><stop offset="0.715" stop-color="#3d68a4"/><stop offset="0.758" stop-color="#2c589e"/><stop offset="0.812" stop-color="#244e94"/><stop offset="0.944" stop-color="#163a76"/></radialGradient></defs><rect width="937" height="960" fill="url(#sky)"/><path d="M384.3 508.4L382.4 143.5M376.0 514.7L373.1 145.4M367.4 521.1L363.5 147.4M358.7 527.7L353.6 149.5M349.7 534.5L343.4 151.5M340.5 541.4L333.0 153.7M331.0 548.5L322.2 155.9M321.3 555.8L311.1 158.2M311.3 563.3L299.6 160.6M301.0 571.0L287.8 163.0M290.5 578.9L275.7 165.5M279.6 587.1L263.1 168.1M268.5 595.5L250.1 170.8M257.0 604.1L236.7 173.5M245.1 613.0L222.8 176.4M232.9 622.1L208.5 179.3M220.4 631.6L193.6 182.4M207.4 641.3L178.3 185.5M194.1 651.3L162.3 188.8M180.3 661.7L145.8 192.2M392.4 486.1L164.4 651.7M392.4 469.6L162.8 630.7M392.3 453.0L161.1 609.4M392.3 436.2L159.4 587.8M392.2 419.3L157.7 565.9M392.2 402.1L156.0 543.7M392.1 384.8L154.2 521.2M392.1 367.3L152.4 498.4M392.0 349.6L150.6 475.2M392.0 331.7L148.7 451.6M391.9 313.7L146.9 427.8M391.9 295.4L145.0 403.5M391.8 276.9L143.0 378.9M391.8 258.2L141.1 354.0M391.7 239.3L139.1 328.6M391.7 220.2L137.1 302.9M391.6 200.9L135.0 276.7M391.6 181.4L132.9 250.1M391.5 161.6L130.8 223.2M408.1 505.4L409.0 142.6M424.0 508.5L426.7 143.5M440.1 511.6L444.6 144.5M456.3 514.7L462.8 145.4M472.8 517.9L481.3 146.4M489.5 521.1L500.0 147.4M506.4 524.4L519.0 148.4M523.5 527.7L538.3 149.4M540.8 531.1L557.9 150.4M558.4 534.5L577.7 151.5M576.2 537.9L597.8 152.5M594.2 541.4L618.2 153.6M612.5 544.9L639.0 154.7M631.0 548.5L660.0 155.8M649.7 552.2L681.4 156.9M668.7 555.8L703.0 158.0M688.0 559.6L725.1 159.2M707.5 563.4L747.4 160.4M727.3 567.2L770.1 161.6M392.4 486.1L749.4 552.9M392.4 469.6L751.5 534.6M392.3 453.0L753.6 516.0M392.3 436.2L755.7 497.2M392.2 419.3L757.8 478.2M392.2 402.1L760.0 459.0M392.1 384.8L762.2 439.5M392.1 367.3L764.4 419.7M392.0 349.6L766.6 399.8M392.0 331.7L768.9 379.6M391.9 313.7L771.2 359.1M391.9 295.4L773.5 338.4M391.8 276.9L775.8 317.4M391.8 258.2L778.2 296.2M391.7 239.3L780.6 274.6M391.7 220.2L783.1 252.9M391.6 200.9L785.6 230.8M391.6 181.4L788.1 208.4M391.5 161.6L790.6 185.7M384.3 508.4L743.1 579.0M376.0 514.7L738.7 587.2M367.4 521.1L734.1 595.5M358.7 527.7L729.5 604.2M349.7 534.5L724.6 613.1M340.5 541.4L719.7 622.2M331.0 548.5L714.5 631.7M321.3 555.8L709.3 641.4M311.3 563.3L703.8 651.5M301.0 571.0L698.2 661.8M290.5 578.9L692.4 672.5M279.6 587.1L686.4 683.6M268.5 595.5L680.2 695.0M257.0 604.1L673.8 706.8M245.1 613.0L667.1 719.1M232.9 622.1L660.3 731.7M220.4 631.6L653.2 744.8M207.4 641.3L645.8 758.5M194.1 651.3L638.1 772.6M180.3 661.7L630.2 787.2M408.1 505.4L185.3 677.9M424.0 508.5L204.8 683.4M440.1 511.6L224.7 689.1M456.3 514.7L244.9 694.9M472.8 517.9L265.4 700.7M489.5 521.1L286.4 706.7M506.4 524.4L307.6 712.8M523.5 527.7L329.3 718.9M540.8 531.1L351.3 725.2M558.4 534.5L373.7 731.6M576.2 537.9L396.5 738.1M594.2 541.4L419.7 744.8M612.5 544.9L443.4 751.5M631.0 548.5L467.5 758.4M649.7 552.2L492.0 765.4M668.7 555.8L517.0 772.5M688.0 559.6L542.5 779.8M707.5 563.4L568.5 787.2M727.3 567.2L594.9 794.8" stroke="#d4e0ee" stroke-opacity="0.34" stroke-width="1" fill="none"/><path d="M392.4 502.3L391.5 141.7M166.1 672.4L128.6 195.8M392.4 502.3L166.1 672.4M391.5 141.7L128.6 195.8M392.4 502.3L391.5 141.7M747.4 571.1L793.2 162.8M392.4 502.3L747.4 571.1M391.5 141.7L793.2 162.8M392.4 502.3L747.4 571.1M166.1 672.4L621.9 802.5M392.4 502.3L166.1 672.4M747.4 571.1L621.9 802.5" stroke="#dde8f2" stroke-opacity="0.5" stroke-width="1.1" fill="none"/><path d="M440.5 48 L442.5 50 L442.5 53 L441 53 Z" fill="#b0d6e0"/><defs><linearGradient id="a1" gradientUnits="userSpaceOnUse" x1="441.4" y1="492.1" x2="450.6" y2="503.7"><stop offset="0.45" stop-color="#0a1e96"/><stop offset="1" stop-color="#08187a"/></linearGradient><linearGradient id="a2" gradientUnits="userSpaceOnUse" x1="422.4" y1="585.2" x2="412.8" y2="574.8"><stop offset="0.45" stop-color="#e18c0e"/><stop offset="1" stop-color="#b6710b"/></linearGradient><linearGradient id="a3" gradientUnits="userSpaceOnUse" x1="384.5" y1="538.5" x2="393.8" y2="550.1"><stop offset="0.45" stop-color="#fa9b0f"/><stop offset="1" stop-color="#d7850d"/></linearGradient><linearGradient id="a4" gradientUnits="userSpaceOnUse" x1="413.3" y1="359.2" x2="418.9" y2="369.3"><stop offset="0.45" stop-color="#0a22ff"/><stop offset="1" stop-color="#0920ed"/></linearGradient><linearGradient id="a5" gradientUnits="userSpaceOnUse" x1="441.9" y1="452.4" x2="450.3" y2="463.9"><stop offset="0.45" stop-color="#fafafa"/><stop offset="1" stop-color="#bebebe"/></linearGradient><linearGradient id="a6" gradientUnits="userSpaceOnUse" x1="437.8" y1="365.8" x2="438.7" y2="359.3"><stop offset="0" stop-color="#081ccf"/><stop offset="0.55" stop-color="#0a22ff"/></linearGradient><linearGradient id="a7" gradientUnits="userSpaceOnUse" x1="447.2" y1="576.5" x2="443.1" y2="595.2"><stop offset="0" stop-color="#828282"/><stop offset="0.55" stop-color="#a0a0a0"/></linearGradient><linearGradient id="a8" gradientUnits="userSpaceOnUse" x1="461.2" y1="593.8" x2="451.6" y2="584.2"><stop offset="0.45" stop-color="#b4b4b4"/><stop offset="1" stop-color="#898989"/></linearGradient><linearGradient id="a9" gradientUnits="userSpaceOnUse" x1="432.3" y1="499.3" x2="441.7" y2="511.1"><stop offset="0.45" stop-color="#0a1e96"/><stop offset="1" stop-color="#081772"/></linearGradient><linearGradient id="a10" gradientUnits="userSpaceOnUse" x1="417.9" y1="560.3" x2="437.5" y2="560.4"><stop offset="0.45" stop-color="#081878"/><stop offset="1" stop-color="#061361"/></linearGradient><linearGradient id="a11" gradientUnits="userSpaceOnUse" x1="403.4" y1="522.9" x2="412.8" y2="534.7"><stop offset="0.45" stop-color="#fa9b0f"/><stop offset="1" stop-color="#ca7e0c"/></linearGradient><linearGradient id="a12" gradientUnits="userSpaceOnUse" x1="457.6" y1="368.5" x2="458.5" y2="362.0"><stop offset="0" stop-color="#081ac2"/><stop offset="0.55" stop-color="#0a22ff"/></linearGradient><linearGradient id="a13" gradientUnits="userSpaceOnUse" x1="403.7" y1="364.5" x2="409.4" y2="374.8"><stop offset="0.45" stop-color="#0a22ff"/><stop offset="1" stop-color="#081ccf"/></linearGradient><linearGradient id="a14" gradientUnits="userSpaceOnUse" x1="418.0" y1="540.6" x2="437.7" y2="540.7"><stop offset="0.45" stop-color="#c8c8c8"/><stop offset="1" stop-color="#989898"/></linearGradient><linearGradient id="a15" gradientUnits="userSpaceOnUse" x1="530.5" y1="578.7" x2="521.0" y2="570.1"><stop offset="0.45" stop-color="#9090e6"/><stop offset="1" stop-color="#8686d5"/></linearGradient><linearGradient id="a16" gradientUnits="userSpaceOnUse" x1="477.7" y1="371.3" x2="478.6" y2="364.7"><stop offset="0" stop-color="#081ac2"/><stop offset="0.55" stop-color="#0a22ff"/></linearGradient><linearGradient id="a17" gradientUnits="userSpaceOnUse" x1="432.7" y1="459.1" x2="441.2" y2="470.8"><stop offset="0.45" stop-color="#fafafa"/><stop offset="1" stop-color="#bebebe"/></linearGradient><linearGradient id="a18" gradientUnits="userSpaceOnUse" x1="567.5" y1="540.8" x2="569.3" y2="531.6"><stop offset="0" stop-color="#d7850d"/><stop offset="0.55" stop-color="#fa9b0f"/></linearGradient><linearGradient id="a19" gradientUnits="userSpaceOnUse" x1="418.1" y1="520.6" x2="437.9" y2="520.7"><stop offset="0.45" stop-color="#1c1c1c"/><stop offset="1" stop-color="#151515"/></linearGradient><linearGradient id="a20" gradientUnits="userSpaceOnUse" x1="422.9" y1="506.8" x2="432.4" y2="518.7"><stop offset="0.45" stop-color="#232323"/><stop offset="1" stop-color="#1b1b1b"/></linearGradient><linearGradient id="a21" gradientUnits="userSpaceOnUse" x1="540.9" y1="510.6" x2="531.2" y2="500.7"><stop offset="0.45" stop-color="#091fe6"/><stop offset="1" stop-color="#0719ba"/></linearGradient><linearGradient id="a22" gradientUnits="userSpaceOnUse" x1="508.0" y1="589.7" x2="503.8" y2="608.9"><stop offset="0" stop-color="#828282"/><stop offset="0.55" stop-color="#a0a0a0"/></linearGradient><linearGradient id="a23" gradientUnits="userSpaceOnUse" x1="527.7" y1="553.0" x2="535.4" y2="553.3"><stop offset="0" stop-color="#7575ba"/><stop offset="0.55" stop-color="#9090e6"/></linearGradient><linearGradient id="a24" gradientUnits="userSpaceOnUse" x1="498.1" y1="374.1" x2="499.0" y2="367.5"><stop offset="0" stop-color="#081ac2"/><stop offset="0.55" stop-color="#0a22ff"/></linearGradient><linearGradient id="a25" gradientUnits="userSpaceOnUse" x1="423.3" y1="346.1" x2="428.9" y2="356.4"><stop offset="0.45" stop-color="#0a22ff"/><stop offset="1" stop-color="#0920ed"/></linearGradient><linearGradient id="a26" gradientUnits="userSpaceOnUse" x1="393.8" y1="369.9" x2="399.6" y2="380.4"><stop offset="0.45" stop-color="#0a22ff"/><stop offset="1" stop-color="#081ac2"/></linearGradient><linearGradient id="a27" gradientUnits="userSpaceOnUse" x1="572.5" y1="445.3" x2="583.9" y2="457.8"><stop offset="0" stop-color="#081ccf"/><stop offset="0.55" stop-color="#0a22ff"/></linearGradient><linearGradient id="a28" gradientUnits="userSpaceOnUse" x1="518.9" y1="377.0" x2="519.8" y2="370.3"><stop offset="0" stop-color="#081ac2"/><stop offset="0.55" stop-color="#0a22ff"/></linearGradient><linearGradient id="a29" gradientUnits="userSpaceOnUse" x1="528.6" y1="532.6" x2="536.2" y2="532.9"><stop offset="0" stop-color="#6d6dae"/><stop offset="0.55" stop-color="#9090e6"/></linearGradient><linearGradient id="a30" gradientUnits="userSpaceOnUse" x1="522.4" y1="587.5" x2="512.8" y2="578.8"><stop offset="0.45" stop-color="#9090e6"/><stop offset="1" stop-color="#7c7cc5"/></linearGradient><linearGradient id="a31" gradientUnits="userSpaceOnUse" x1="569.3" y1="438.1" x2="576.4" y2="438.5"><stop offset="0" stop-color="#0717ae"/><stop offset="0.55" stop-color="#081ac5"/></linearGradient><linearGradient id="a32" gradientUnits="userSpaceOnUse" x1="448.7" y1="352.6" x2="449.6" y2="346.2"><stop offset="0" stop-color="#081ccf"/><stop offset="0.55" stop-color="#0a22ff"/></linearGradient><linearGradient id="a33" gradientUnits="userSpaceOnUse" x1="423.2" y1="466.1" x2="431.8" y2="477.9"><stop offset="0.45" stop-color="#fafafa"/><stop offset="1" stop-color="#bebebe"/></linearGradient><linearGradient id="a34" gradientUnits="userSpaceOnUse" x1="562.8" y1="494.0" x2="552.9" y2="484.1"><stop offset="0.45" stop-color="#e1e1e1"/><stop offset="1" stop-color="#ababab"/></linearGradient><linearGradient id="a35" gradientUnits="userSpaceOnUse" x1="539.9" y1="379.9" x2="540.9" y2="373.2"><stop offset="0" stop-color="#081ac2"/><stop offset="0.55" stop-color="#0a22ff"/></linearGradient><linearGradient id="a36" gradientUnits="userSpaceOnUse" x1="533.0" y1="518.4" x2="523.1" y2="508.3"><stop offset="0.45" stop-color="#081ac5"/><stop offset="1" stop-color="#0616a5"/></linearGradient><linearGradient id="a37" gradientUnits="userSpaceOnUse" x1="469.2" y1="355.3" x2="470.1" y2="348.9"><stop offset="0" stop-color="#081ac2"/><stop offset="0.55" stop-color="#0a22ff"/></linearGradient><linearGradient id="a38" gradientUnits="userSpaceOnUse" x1="398.5" y1="434.8" x2="418.5" y2="434.7"><stop offset="0.45" stop-color="#c04018"/><stop offset="1" stop-color="#9c3413"/></linearGradient><linearGradient id="a39" gradientUnits="userSpaceOnUse" x1="403.5" y1="421.1" x2="410.8" y2="432.4"><stop offset="0.45" stop-color="#f0501e"/><stop offset="1" stop-color="#b63d17"/></linearGradient><linearGradient id="a40" gradientUnits="userSpaceOnUse" x1="413.6" y1="351.3" x2="419.3" y2="361.8"><stop offset="0.45" stop-color="#0a22ff"/><stop offset="1" stop-color="#081ccf"/></linearGradient><linearGradient id="a41" gradientUnits="userSpaceOnUse" x1="541.1" y1="628.8" x2="536.6" y2="648.1"><stop offset="0" stop-color="#ac6b0a"/><stop offset="0.55" stop-color="#c87c0c"/></linearGradient><linearGradient id="a42" gradientUnits="userSpaceOnUse" x1="554.1" y1="522.4" x2="567.2" y2="535.1"><stop offset="0" stop-color="#e8900e"/><stop offset="0.55" stop-color="#fa9b0f"/></linearGradient><linearGradient id="a43" gradientUnits="userSpaceOnUse" x1="561.3" y1="382.8" x2="562.3" y2="376.1"><stop offset="0" stop-color="#081ccf"/><stop offset="0.55" stop-color="#0a22ff"/></linearGradient><linearGradient id="a44" gradientUnits="userSpaceOnUse" x1="378.5" y1="389.2" x2="398.5" y2="389.0"><stop offset="0.45" stop-color="#081bcc"/><stop offset="1" stop-color="#0717af"/></linearGradient><linearGradient id="a45" gradientUnits="userSpaceOnUse" x1="383.6" y1="375.6" x2="389.5" y2="386.2"><stop offset="0.45" stop-color="#0a22ff"/><stop offset="1" stop-color="#081ccf"/></linearGradient><linearGradient id="a46" gradientUnits="userSpaceOnUse" x1="490.0" y1="358.1" x2="490.9" y2="351.6"><stop offset="0" stop-color="#081ac2"/><stop offset="0.55" stop-color="#0a22ff"/></linearGradient><linearGradient id="a47" gradientUnits="userSpaceOnUse" x1="514.1" y1="596.6" x2="504.4" y2="587.7"><stop offset="0.45" stop-color="#9090e6"/><stop offset="1" stop-color="#8686d5"/></linearGradient><linearGradient id="a48" gradientUnits="userSpaceOnUse" x1="564.9" y1="452.2" x2="576.5" y2="464.8"><stop offset="0" stop-color="#081ac2"/><stop offset="0.55" stop-color="#0a22ff"/></linearGradient><linearGradient id="a49" gradientUnits="userSpaceOnUse" x1="575.9" y1="381.4" x2="585.6" y2="393.8"><stop offset="0" stop-color="#0920ed"/><stop offset="0.55" stop-color="#0a22ff"/></linearGradient><linearGradient id="a50" gradientUnits="userSpaceOnUse" x1="413.4" y1="473.2" x2="422.2" y2="485.2"><stop offset="0.45" stop-color="#fafafa"/><stop offset="1" stop-color="#cacaca"/></linearGradient><linearGradient id="a51" gradientUnits="userSpaceOnUse" x1="438.9" y1="503.5" x2="435.1" y2="523.7"><stop offset="0" stop-color="#06125b"/><stop offset="0.55" stop-color="#081878"/></linearGradient><linearGradient id="a52" gradientUnits="userSpaceOnUse" x1="555.1" y1="501.6" x2="545.1" y2="491.6"><stop offset="0.45" stop-color="#e1e1e1"/><stop offset="1" stop-color="#b6b6b6"/></linearGradient><linearGradient id="a53" gradientUnits="userSpaceOnUse" x1="520.3" y1="540.9" x2="541.8" y2="541.7"><stop offset="0" stop-color="#141414"/><stop offset="0.55" stop-color="#151515"/></linearGradient><linearGradient id="a54" gradientUnits="userSpaceOnUse" x1="511.2" y1="360.9" x2="512.0" y2="354.3"><stop offset="0" stop-color="#081ac2"/><stop offset="0.55" stop-color="#0a22ff"/></linearGradient><linearGradient id="a55" gradientUnits="userSpaceOnUse" x1="434.0" y1="332.2" x2="439.5" y2="342.7"><stop offset="0.45" stop-color="#0a22ff"/><stop offset="1" stop-color="#081ccf"/></linearGradient><linearGradient id="a56" gradientUnits="userSpaceOnUse" x1="511.0" y1="570.4" x2="519.2" y2="570.7"><stop offset="0.45" stop-color="#202020"/><stop offset="1" stop-color="#1a1a1a"/></linearGradient><linearGradient id="a57" gradientUnits="userSpaceOnUse" x1="398.5" y1="370.4" x2="418.9" y2="370.4"><stop offset="0.45" stop-color="#0719be"/><stop offset="1" stop-color="#06159b"/></linearGradient><linearGradient id="a58" gradientUnits="userSpaceOnUse" x1="403.6" y1="356.7" x2="409.3" y2="367.4"><stop offset="0.45" stop-color="#0a22ff"/><stop offset="1" stop-color="#081ccf"/></linearGradient><linearGradient id="a59" gradientUnits="userSpaceOnUse" x1="459.6" y1="507.5" x2="455.7" y2="527.8"><stop offset="0" stop-color="#06125b"/><stop offset="0.55" stop-color="#081878"/></linearGradient><linearGradient id="a60" gradientUnits="userSpaceOnUse" x1="546.2" y1="530.6" x2="559.5" y2="543.4"><stop offset="0" stop-color="#cacaca"/><stop offset="0.55" stop-color="#fafafa"/></linearGradient><linearGradient id="a61" gradientUnits="userSpaceOnUse" x1="532.7" y1="363.7" x2="533.5" y2="357.1"><stop offset="0" stop-color="#081ac2"/><stop offset="0.55" stop-color="#0a22ff"/></linearGradient><linearGradient id="a62" gradientUnits="userSpaceOnUse" x1="546.2" y1="530.6" x2="536.2" y2="520.9"><stop offset="0" stop-color="#ab6a0a"/><stop offset="0.55" stop-color="#e18c0e"/></linearGradient><linearGradient id="a63" gradientUnits="userSpaceOnUse" x1="511.7" y1="549.5" x2="520.0" y2="549.8"><stop offset="0.45" stop-color="#d1d1d1"/><stop offset="1" stop-color="#a2a2a2"/></linearGradient><linearGradient id="a64" gradientUnits="userSpaceOnUse" x1="418.9" y1="435.9" x2="415.4" y2="456.9"><stop offset="0" stop-color="#0717af"/><stop offset="0.55" stop-color="#081bcc"/></linearGradient><linearGradient id="a65" gradientUnits="userSpaceOnUse" x1="552.7" y1="473.6" x2="574.8" y2="474.7"><stop offset="0" stop-color="#061493"/><stop offset="0.55" stop-color="#0719be"/></linearGradient><linearGradient id="a66" gradientUnits="userSpaceOnUse" x1="557.2" y1="459.3" x2="568.9" y2="472.1"><stop offset="0" stop-color="#0718b8"/><stop offset="0.55" stop-color="#0920ed"/></linearGradient><linearGradient id="a67" gradientUnits="userSpaceOnUse" x1="480.7" y1="511.5" x2="476.8" y2="532.0"><stop offset="0" stop-color="#06159b"/><stop offset="0.55" stop-color="#081bcc"/></linearGradient><linearGradient id="a68" gradientUnits="userSpaceOnUse" x1="439.4" y1="461.1" x2="435.8" y2="481.9"><stop offset="0.45" stop-color="#c04018"/><stop offset="1" stop-color="#923112"/></linearGradient><linearGradient id="a69" gradientUnits="userSpaceOnUse" x1="557.2" y1="459.3" x2="546.9" y2="448.0"><stop offset="0.45" stop-color="#0717ae"/><stop offset="1" stop-color="#0616a5"/></linearGradient><linearGradient id="a70" gradientUnits="userSpaceOnUse" x1="554.5" y1="366.6" x2="555.4" y2="360.0"><stop offset="0" stop-color="#081ccf"/><stop offset="0.55" stop-color="#0a22ff"/></linearGradient><linearGradient id="a71" gradientUnits="userSpaceOnUse" x1="568.2" y1="387.4" x2="557.9" y2="374.2"><stop offset="0" stop-color="#0616a5"/><stop offset="0.55" stop-color="#081cd5"/></linearGradient><linearGradient id="a72" gradientUnits="userSpaceOnUse" x1="403.3" y1="480.6" x2="412.2" y2="492.8"><stop offset="0.45" stop-color="#fafafa"/><stop offset="1" stop-color="#e8e8e8"/></linearGradient><linearGradient id="a73" gradientUnits="userSpaceOnUse" x1="568.2" y1="387.4" x2="578.2" y2="400.0"><stop offset="0" stop-color="#081ac2"/><stop offset="0.55" stop-color="#0920ed"/></linearGradient><linearGradient id="a74" gradientUnits="userSpaceOnUse" x1="388.1" y1="398.3" x2="408.6" y2="398.2"><stop offset="0.45" stop-color="#081bcc"/><stop offset="1" stop-color="#0616a5"/></linearGradient><linearGradient id="a75" gradientUnits="userSpaceOnUse" x1="393.3" y1="384.4" x2="399.6" y2="395.5"><stop offset="0.45" stop-color="#0920ed"/><stop offset="1" stop-color="#081ac2"/></linearGradient><linearGradient id="a76" gradientUnits="userSpaceOnUse" x1="547.1" y1="509.5" x2="537.0" y2="499.3"><stop offset="0.45" stop-color="#e1e1e1"/><stop offset="1" stop-color="#d1d1d1"/></linearGradient><linearGradient id="a77" gradientUnits="userSpaceOnUse" x1="419.0" y1="351.1" x2="439.9" y2="351.3"><stop offset="0.45" stop-color="#0719be"/><stop offset="1" stop-color="#06159b"/></linearGradient><linearGradient id="a78" gradientUnits="userSpaceOnUse" x1="424.1" y1="337.3" x2="429.7" y2="348.0"><stop offset="0.45" stop-color="#0a22ff"/><stop offset="1" stop-color="#081ccf"/></linearGradient><linearGradient id="a79" gradientUnits="userSpaceOnUse" x1="502.1" y1="515.6" x2="498.1" y2="536.2"><stop offset="0" stop-color="#06159b"/><stop offset="0.55" stop-color="#081bcc"/></linearGradient><linearGradient id="a80" gradientUnits="userSpaceOnUse" x1="429.1" y1="448.4" x2="450.0" y2="448.6"><stop offset="0" stop-color="#060606"/><stop offset="0.55" stop-color="#060606"/></linearGradient><linearGradient id="a81" gradientUnits="userSpaceOnUse" x1="460.4" y1="464.7" x2="456.8" y2="485.7"><stop offset="0.45" stop-color="#c04018"/><stop offset="1" stop-color="#923112"/></linearGradient><linearGradient id="a82" gradientUnits="userSpaceOnUse" x1="429.3" y1="490.1" x2="431.0" y2="480.9"><stop offset="0.45" stop-color="#fafafa"/><stop offset="1" stop-color="#cacaca"/></linearGradient><linearGradient id="a83" gradientUnits="userSpaceOnUse" x1="522.7" y1="477.4" x2="544.7" y2="478.2"><stop offset="0" stop-color="#05128b"/><stop offset="0.55" stop-color="#0717af"/></linearGradient><linearGradient id="a84" gradientUnits="userSpaceOnUse" x1="548.1" y1="488.2" x2="537.8" y2="477.4"><stop offset="0.45" stop-color="#081cd5"/><stop offset="1" stop-color="#0719ba"/></linearGradient><linearGradient id="a85" gradientUnits="userSpaceOnUse" x1="544.9" y1="545.5" x2="540.8" y2="566.1"><stop offset="0.45" stop-color="#c87c0c"/><stop offset="1" stop-color="#ac6b0a"/></linearGradient><linearGradient id="a86" gradientUnits="userSpaceOnUse" x1="538.0" y1="539.0" x2="551.5" y2="552.1"><stop offset="0" stop-color="#ca7e0c"/><stop offset="0.55" stop-color="#fa9b0f"/></linearGradient><linearGradient id="a87" gradientUnits="userSpaceOnUse" x1="523.8" y1="519.7" x2="519.9" y2="540.5"><stop offset="0" stop-color="#a2640a"/><stop offset="0.55" stop-color="#c87c0c"/></linearGradient><linearGradient id="a88" gradientUnits="userSpaceOnUse" x1="538.0" y1="539.0" x2="527.8" y2="529.2"><stop offset="0" stop-color="#b6710b"/><stop offset="0.55" stop-color="#e18c0e"/></linearGradient><linearGradient id="a89" gradientUnits="userSpaceOnUse" x1="577.0" y1="433.5" x2="584.3" y2="433.9"><stop offset="0" stop-color="#0719ba"/><stop offset="0.55" stop-color="#091fe6"/></linearGradient><linearGradient id="a90" gradientUnits="userSpaceOnUse" x1="439.9" y1="417.4" x2="436.6" y2="438.9"><stop offset="0" stop-color="#061493"/><stop offset="0.55" stop-color="#0719be"/></linearGradient><linearGradient id="a91" gradientUnits="userSpaceOnUse" x1="450.0" y1="452.0" x2="471.3" y2="452.3"><stop offset="0.45" stop-color="#c47840"/><stop offset="1" stop-color="#b6703c"/></linearGradient><linearGradient id="a92" gradientUnits="userSpaceOnUse" x1="481.8" y1="468.4" x2="478.1" y2="489.6"><stop offset="0.45" stop-color="#c47840"/><stop offset="1" stop-color="#955b31"/></linearGradient><linearGradient id="a93" gradientUnits="userSpaceOnUse" x1="450.4" y1="494.1" x2="452.1" y2="484.8"><stop offset="0.45" stop-color="#fa9b0f"/><stop offset="1" stop-color="#be760b"/></linearGradient><linearGradient id="a94" gradientUnits="userSpaceOnUse" x1="408.7" y1="379.3" x2="429.7" y2="379.3"><stop offset="0.45" stop-color="#0719be"/><stop offset="1" stop-color="#06159b"/></linearGradient><linearGradient id="a95" gradientUnits="userSpaceOnUse" x1="413.8" y1="365.2" x2="420.1" y2="376.4"><stop offset="0.45" stop-color="#0920ed"/><stop offset="1" stop-color="#081ac2"/></linearGradient><linearGradient id="a96" gradientUnits="userSpaceOnUse" x1="451.0" y1="321.2" x2="448.3" y2="343.8"><stop offset="0.45" stop-color="#081bcc"/><stop offset="1" stop-color="#0616a5"/></linearGradient><linearGradient id="a97" gradientUnits="userSpaceOnUse" x1="535.6" y1="575.9" x2="537.8" y2="565.4"><stop offset="0.45" stop-color="#fa9b0f"/><stop offset="1" stop-color="#d7850d"/></linearGradient><linearGradient id="a98" gradientUnits="userSpaceOnUse" x1="578.3" y1="411.2" x2="585.6" y2="411.6"><stop offset="0" stop-color="#0719ba"/><stop offset="0.55" stop-color="#091fe6"/></linearGradient><linearGradient id="a99" gradientUnits="userSpaceOnUse" x1="518.0" y1="492.1" x2="529.8" y2="505.2"><stop offset="0" stop-color="#bebebe"/><stop offset="0.55" stop-color="#e8e8e8"/></linearGradient><linearGradient id="a100" gradientUnits="userSpaceOnUse" x1="461.2" y1="420.8" x2="457.8" y2="442.4"><stop offset="0" stop-color="#061493"/><stop offset="0.55" stop-color="#0719be"/></linearGradient><linearGradient id="a101" gradientUnits="userSpaceOnUse" x1="503.5" y1="472.2" x2="499.8" y2="493.5"><stop offset="0.45" stop-color="#c47840"/><stop offset="1" stop-color="#955b31"/></linearGradient><linearGradient id="a102" gradientUnits="userSpaceOnUse" x1="514.0" y1="485.1" x2="522.4" y2="485.4"><stop offset="0.45" stop-color="#b36d3a"/><stop offset="1" stop-color="#965c31"/></linearGradient><linearGradient id="a103" gradientUnits="userSpaceOnUse" x1="482.3" y1="446.5" x2="478.8" y2="467.9"><stop offset="0" stop-color="#a96737"/><stop offset="0.55" stop-color="#c47840"/></linearGradient><linearGradient id="a104" gradientUnits="userSpaceOnUse" x1="398.1" y1="430.1" x2="419.1" y2="430.1"><stop offset="0.45" stop-color="#081bcc"/><stop offset="1" stop-color="#0719be"/></linearGradient><linearGradient id="a105" gradientUnits="userSpaceOnUse" x1="424.1" y1="441.1" x2="413.8" y2="426.3"><stop offset="0.45" stop-color="#081ac5"/><stop offset="1" stop-color="#0616a5"/></linearGradient><linearGradient id="a106" gradientUnits="userSpaceOnUse" x1="540.3" y1="345.4" x2="530.0" y2="329.9"><stop offset="0" stop-color="#0719ba"/><stop offset="0.55" stop-color="#091fe6"/></linearGradient><linearGradient id="a107" gradientUnits="userSpaceOnUse" x1="545.6" y1="459.3" x2="568.1" y2="460.3"><stop offset="0" stop-color="#9c3413"/><stop offset="0.55" stop-color="#c04018"/></linearGradient><linearGradient id="a108" gradientUnits="userSpaceOnUse" x1="571.3" y1="470.3" x2="560.8" y2="459.5"><stop offset="0.45" stop-color="#d8481b"/><stop offset="1" stop-color="#ba3e17"/></linearGradient><linearGradient id="a109" gradientUnits="userSpaceOnUse" x1="471.8" y1="498.0" x2="473.6" y2="488.7"><stop offset="0.45" stop-color="#fa9b0f"/><stop offset="1" stop-color="#be760b"/></linearGradient><linearGradient id="a110" gradientUnits="userSpaceOnUse" x1="540.3" y1="345.4" x2="548.3" y2="357.7"><stop offset="0" stop-color="#081ccf"/><stop offset="0.55" stop-color="#0a22ff"/></linearGradient><linearGradient id="a111" gradientUnits="userSpaceOnUse" x1="561.5" y1="371.1" x2="550.9" y2="356.9"><stop offset="0" stop-color="#0719ba"/><stop offset="0.55" stop-color="#091fe6"/></linearGradient><linearGradient id="a112" gradientUnits="userSpaceOnUse" x1="561.5" y1="371.1" x2="570.9" y2="383.8"><stop offset="0" stop-color="#081ccf"/><stop offset="0.55" stop-color="#0a22ff"/></linearGradient><linearGradient id="a113" gradientUnits="userSpaceOnUse" x1="582.7" y1="396.7" x2="572.1" y2="383.9"><stop offset="0" stop-color="#081cd5"/><stop offset="0.55" stop-color="#091fe6"/></linearGradient><linearGradient id="a114" gradientUnits="userSpaceOnUse" x1="472.7" y1="323.8" x2="469.9" y2="346.6"><stop offset="0.45" stop-color="#081bcc"/><stop offset="1" stop-color="#06159b"/></linearGradient><linearGradient id="a115" gradientUnits="userSpaceOnUse" x1="398.1" y1="407.9" x2="419.2" y2="407.9"><stop offset="0.45" stop-color="#081bcc"/><stop offset="1" stop-color="#0717af"/></linearGradient><linearGradient id="a116" gradientUnits="userSpaceOnUse" x1="403.4" y1="393.6" x2="410.3" y2="405.2"><stop offset="0.45" stop-color="#0920ed"/><stop offset="1" stop-color="#081ac2"/></linearGradient><linearGradient id="a117" gradientUnits="userSpaceOnUse" x1="504.2" y1="450.1" x2="500.6" y2="471.7"><stop offset="0" stop-color="#060606"/><stop offset="0.55" stop-color="#060606"/></linearGradient><linearGradient id="a118" gradientUnits="userSpaceOnUse" x1="546.6" y1="437.1" x2="569.2" y2="438.1"><stop offset="0" stop-color="#06159b"/><stop offset="0.55" stop-color="#081bcc"/></linearGradient><linearGradient id="a119" gradientUnits="userSpaceOnUse" x1="440.8" y1="349.6" x2="437.8" y2="372.2"><stop offset="0.45" stop-color="#081bcc"/><stop offset="1" stop-color="#0616a5"/></linearGradient><linearGradient id="a120" gradientUnits="userSpaceOnUse" x1="440.8" y1="349.6" x2="441.6" y2="342.9"><stop offset="0.45" stop-color="#0a22ff"/><stop offset="1" stop-color="#081ccf"/></linearGradient><linearGradient id="a121" gradientUnits="userSpaceOnUse" x1="493.7" y1="502.1" x2="495.4" y2="492.7"><stop offset="0.45" stop-color="#fafafa"/><stop offset="1" stop-color="#cacaca"/></linearGradient><linearGradient id="a122" gradientUnits="userSpaceOnUse" x1="494.7" y1="326.4" x2="491.9" y2="349.4"><stop offset="0.45" stop-color="#081bcc"/><stop offset="1" stop-color="#06159b"/></linearGradient><linearGradient id="a123" gradientUnits="userSpaceOnUse" x1="526.4" y1="453.8" x2="522.8" y2="475.6"><stop offset="0" stop-color="#0717af"/><stop offset="0.55" stop-color="#081bcc"/></linearGradient><linearGradient id="a124" gradientUnits="userSpaceOnUse" x1="537.1" y1="466.8" x2="545.2" y2="467.2"><stop offset="0.45" stop-color="#091fe6"/><stop offset="1" stop-color="#0719ba"/></linearGradient><linearGradient id="a125" gradientUnits="userSpaceOnUse" x1="504.9" y1="427.6" x2="501.4" y2="449.6"><stop offset="0" stop-color="#05128b"/><stop offset="0.55" stop-color="#0717af"/></linearGradient><linearGradient id="a126" gradientUnits="userSpaceOnUse" x1="547.6" y1="414.5" x2="570.4" y2="415.6"><stop offset="0" stop-color="#06159b"/><stop offset="0.55" stop-color="#081bcc"/></linearGradient><linearGradient id="a127" gradientUnits="userSpaceOnUse" x1="509.2" y1="500.1" x2="521.2" y2="513.4"><stop offset="0" stop-color="#e8e8e8"/><stop offset="0.55" stop-color="#fafafa"/></linearGradient><linearGradient id="a128" gradientUnits="userSpaceOnUse" x1="462.5" y1="352.5" x2="459.5" y2="375.2"><stop offset="0.45" stop-color="#081bcc"/><stop offset="1" stop-color="#06159b"/></linearGradient><linearGradient id="a129" gradientUnits="userSpaceOnUse" x1="462.5" y1="352.5" x2="463.4" y2="345.7"><stop offset="0.45" stop-color="#0a22ff"/><stop offset="1" stop-color="#081ac2"/></linearGradient><linearGradient id="a130" gradientUnits="userSpaceOnUse" x1="517.0" y1="329.1" x2="514.3" y2="352.3"><stop offset="0.45" stop-color="#081bcc"/><stop offset="1" stop-color="#0616a5"/></linearGradient><linearGradient id="a131" gradientUnits="userSpaceOnUse" x1="531.7" y1="351.1" x2="521.3" y2="335.3"><stop offset="0" stop-color="#0719ba"/><stop offset="0.55" stop-color="#091fe6"/></linearGradient><linearGradient id="a132" gradientUnits="userSpaceOnUse" x1="538.1" y1="444.3" x2="546.2" y2="444.6"><stop offset="0.45" stop-color="#091fe6"/><stop offset="1" stop-color="#0717ae"/></linearGradient><linearGradient id="a133" gradientUnits="userSpaceOnUse" x1="527.0" y1="365.5" x2="549.7" y2="366.4"><stop offset="0" stop-color="#06159b"/><stop offset="0.55" stop-color="#0719be"/></linearGradient><linearGradient id="a134" gradientUnits="userSpaceOnUse" x1="531.7" y1="351.1" x2="540.0" y2="363.5"><stop offset="0" stop-color="#081ccf"/><stop offset="0.55" stop-color="#0a22ff"/></linearGradient><linearGradient id="a135" gradientUnits="userSpaceOnUse" x1="553.3" y1="377.1" x2="542.6" y2="362.7"><stop offset="0" stop-color="#0719ba"/><stop offset="0.55" stop-color="#091fe6"/></linearGradient><linearGradient id="a136" gradientUnits="userSpaceOnUse" x1="430.3" y1="378.7" x2="427.0" y2="401.1"><stop offset="0.45" stop-color="#081bcc"/><stop offset="1" stop-color="#0616a5"/></linearGradient><linearGradient id="a137" gradientUnits="userSpaceOnUse" x1="430.3" y1="378.7" x2="431.3" y2="371.2"><stop offset="0.45" stop-color="#0a22ff"/><stop offset="1" stop-color="#081ccf"/></linearGradient><linearGradient id="a138" gradientUnits="userSpaceOnUse" x1="574.9" y1="403.2" x2="585.9" y2="416.5"><stop offset="0" stop-color="#081ccf"/><stop offset="0.55" stop-color="#0a22ff"/></linearGradient><linearGradient id="a139" gradientUnits="userSpaceOnUse" x1="548.6" y1="391.7" x2="571.6" y2="392.7"><stop offset="0" stop-color="#0616a5"/><stop offset="0.55" stop-color="#081bcc"/></linearGradient><linearGradient id="a140" gradientUnits="userSpaceOnUse" x1="553.3" y1="377.1" x2="562.9" y2="390.0"><stop offset="0" stop-color="#081ccf"/><stop offset="0.55" stop-color="#0a22ff"/></linearGradient><linearGradient id="a141" gradientUnits="userSpaceOnUse" x1="574.9" y1="403.2" x2="564.1" y2="390.2"><stop offset="0" stop-color="#081ac5"/><stop offset="0.55" stop-color="#091fe6"/></linearGradient><linearGradient id="a142" gradientUnits="userSpaceOnUse" x1="473.4" y1="431.2" x2="469.8" y2="453.3"><stop offset="0" stop-color="#06159b"/><stop offset="0.55" stop-color="#081bcc"/></linearGradient><linearGradient id="a143" gradientUnits="userSpaceOnUse" x1="488.5" y1="451.9" x2="477.8" y2="438.4"><stop offset="0.45" stop-color="#081ac5"/><stop offset="1" stop-color="#0616a5"/></linearGradient><linearGradient id="a144" gradientUnits="userSpaceOnUse" x1="484.6" y1="355.4" x2="481.6" y2="378.3"><stop offset="0.45" stop-color="#081bcc"/><stop offset="1" stop-color="#06159b"/></linearGradient><linearGradient id="a145" gradientUnits="userSpaceOnUse" x1="484.6" y1="355.4" x2="485.5" y2="348.5"><stop offset="0.45" stop-color="#0a22ff"/><stop offset="1" stop-color="#081ac2"/></linearGradient><linearGradient id="a146" gradientUnits="userSpaceOnUse" x1="539.1" y1="421.4" x2="547.3" y2="421.8"><stop offset="0.45" stop-color="#081cd5"/><stop offset="1" stop-color="#0717ae"/></linearGradient><linearGradient id="a147" gradientUnits="userSpaceOnUse" x1="452.1" y1="381.8" x2="448.9" y2="404.5"><stop offset="0.45" stop-color="#081bcc"/><stop offset="1" stop-color="#06159b"/></linearGradient><linearGradient id="a148" gradientUnits="userSpaceOnUse" x1="452.1" y1="381.8" x2="453.2" y2="374.3"><stop offset="0.45" stop-color="#0a22ff"/><stop offset="1" stop-color="#081ac2"/></linearGradient><linearGradient id="a149" gradientUnits="userSpaceOnUse" x1="507.1" y1="358.4" x2="504.1" y2="381.5"><stop offset="0.45" stop-color="#081bcc"/><stop offset="1" stop-color="#06159b"/></linearGradient><linearGradient id="a150" gradientUnits="userSpaceOnUse" x1="507.1" y1="358.4" x2="508.0" y2="351.4"><stop offset="0.45" stop-color="#0a22ff"/><stop offset="1" stop-color="#081ccf"/></linearGradient><linearGradient id="a151" gradientUnits="userSpaceOnUse" x1="522.1" y1="380.2" x2="511.4" y2="365.0"><stop offset="0" stop-color="#0616a5"/><stop offset="0.55" stop-color="#081cd5"/></linearGradient><linearGradient id="a152" gradientUnits="userSpaceOnUse" x1="419.6" y1="408.2" x2="420.8" y2="400.1"><stop offset="0.45" stop-color="#0a22ff"/><stop offset="1" stop-color="#081ccf"/></linearGradient><linearGradient id="a153" gradientUnits="userSpaceOnUse" x1="522.1" y1="380.2" x2="531.1" y2="393.1"><stop offset="0" stop-color="#081ac2"/><stop offset="0.55" stop-color="#0920ed"/></linearGradient><linearGradient id="a154" gradientUnits="userSpaceOnUse" x1="543.8" y1="406.6" x2="533.0" y2="392.7"><stop offset="0" stop-color="#0719ba"/><stop offset="0.55" stop-color="#081ac5"/></linearGradient><linearGradient id="a155" gradientUnits="userSpaceOnUse" x1="474.4" y1="385.0" x2="471.1" y2="407.8"><stop offset="0.45" stop-color="#081bcc"/><stop offset="1" stop-color="#06159b"/></linearGradient><linearGradient id="a156" gradientUnits="userSpaceOnUse" x1="474.4" y1="385.0" x2="475.5" y2="377.4"><stop offset="0.45" stop-color="#0a22ff"/><stop offset="1" stop-color="#081ac2"/></linearGradient><linearGradient id="a157" gradientUnits="userSpaceOnUse" x1="506.5" y1="448.0" x2="529.4" y2="448.7"><stop offset="0" stop-color="#0719be"/><stop offset="0.55" stop-color="#081bcc"/></linearGradient><linearGradient id="a158" gradientUnits="userSpaceOnUse" x1="441.6" y1="411.7" x2="442.8" y2="403.5"><stop offset="0.45" stop-color="#0a22ff"/><stop offset="1" stop-color="#081ac2"/></linearGradient><linearGradient id="a159" gradientUnits="userSpaceOnUse" x1="497.0" y1="388.2" x2="493.7" y2="411.3"><stop offset="0.45" stop-color="#081bcc"/><stop offset="1" stop-color="#0616a5"/></linearGradient><linearGradient id="a160" gradientUnits="userSpaceOnUse" x1="497.0" y1="388.2" x2="498.1" y2="380.6"><stop offset="0.45" stop-color="#0a22ff"/><stop offset="1" stop-color="#081ccf"/></linearGradient><linearGradient id="a161" gradientUnits="userSpaceOnUse" x1="507.3" y1="425.0" x2="530.3" y2="425.7"><stop offset="0" stop-color="#0717af"/><stop offset="0.55" stop-color="#081bcc"/></linearGradient><linearGradient id="a162" gradientUnits="userSpaceOnUse" x1="534.2" y1="436.6" x2="523.2" y2="423.3"><stop offset="0.45" stop-color="#091fe6"/><stop offset="1" stop-color="#081ac5"/></linearGradient><linearGradient id="a163" gradientUnits="userSpaceOnUse" x1="463.9" y1="415.1" x2="465.2" y2="406.9"><stop offset="0.45" stop-color="#0a22ff"/><stop offset="1" stop-color="#081ac2"/></linearGradient><linearGradient id="a164" gradientUnits="userSpaceOnUse" x1="508.0" y1="401.6" x2="531.3" y2="402.4"><stop offset="0" stop-color="#0719be"/><stop offset="0.55" stop-color="#081bcc"/></linearGradient><linearGradient id="a165" gradientUnits="userSpaceOnUse" x1="513.0" y1="386.6" x2="522.2" y2="399.7"><stop offset="0" stop-color="#0920ed"/><stop offset="0.55" stop-color="#0a22ff"/></linearGradient><linearGradient id="a166" gradientUnits="userSpaceOnUse" x1="486.7" y1="418.7" x2="488.0" y2="410.4"><stop offset="0.45" stop-color="#0a22ff"/><stop offset="1" stop-color="#081ac2"/></linearGradient><linearGradient id="a167" gradientUnits="userSpaceOnUse" x1="497.8" y1="432.2" x2="507.1" y2="432.5"><stop offset="0.45" stop-color="#091fe6"/><stop offset="1" stop-color="#0717ae"/></linearGradient></defs><polygon points="306.7,545.9 306.2,527.0 324.1,530.8 324.6,549.8" fill="#c8c8c8" stroke="#c8c8c8" stroke-width="0.9" stroke-linejoin="round"/><polygon points="316.8,519.6 306.2,527.0 324.1,530.8 334.5,523.3" fill="#fafafa" stroke="#fafafa" stroke-width="0.9" stroke-linejoin="round"/><polygon points="324.6,549.8 324.1,530.8 342.3,534.6 342.7,553.7" fill="#c8c8c8" stroke="#c8c8c8" stroke-width="0.9" stroke-linejoin="round"/><polygon points="334.5,523.3 324.1,530.8 342.3,534.6 352.6,527.0" fill="#fafafa" stroke="#fafafa" stroke-width="0.9" stroke-linejoin="round"/><polygon points="342.7,553.7 342.3,534.6 360.8,538.5 361.1,557.7" fill="#c8c8c8" stroke="#c8c8c8" stroke-width="0.9" stroke-linejoin="round"/><polygon points="352.6,527.0 342.3,534.6 360.8,538.5 370.8,530.8" fill="#fafafa" stroke="#fafafa" stroke-width="0.9" stroke-linejoin="round"/><polygon points="361.1,557.7 360.8,538.5 379.6,542.4 379.7,561.8" fill="#c8c8c8" stroke="#c8c8c8" stroke-width="0.9" stroke-linejoin="round"/><polygon points="370.8,530.8 360.8,538.5 379.6,542.4 389.4,534.6" fill="#fafafa" stroke="#fafafa" stroke-width="0.9" stroke-linejoin="round"/><polygon points="445.9,488.5 436.9,495.6 456.3,499.3 465.1,492.0" fill="url(#a1)" stroke="url(#a1)" stroke-width="0.9" stroke-linejoin="round"/><polygon points="398.6,585.1 398.6,565.9 417.8,570.1 417.7,589.4" fill="#c87c0c" stroke="#c87c0c" stroke-width="0.9" stroke-linejoin="round"/><polygon points="427.0,580.9 417.7,589.4 417.8,570.1 427.2,561.8" fill="url(#a2)" stroke="url(#a2)" stroke-width="0.9" stroke-linejoin="round"/><polygon points="379.7,561.8 379.6,542.4 398.6,546.4 398.6,565.9" fill="#c87c0c" stroke="#c87c0c" stroke-width="0.9" stroke-linejoin="round"/><polygon points="389.4,534.6 379.6,542.4 398.6,546.4 408.2,538.5" fill="url(#a3)" stroke="url(#a3)" stroke-width="0.9" stroke-linejoin="round"/><polygon points="436.9,613.0 437.1,593.8 456.7,598.2 456.4,617.6" fill="#081878" stroke="#081878" stroke-width="0.9" stroke-linejoin="round"/><polygon points="465.2,608.5 456.4,617.6 456.7,598.2 465.6,589.4" fill="#091b87" stroke="#091b87" stroke-width="0.9" stroke-linejoin="round"/><polygon points="418.1,356.6 408.6,361.8 428.0,364.5 437.2,359.2" fill="url(#a4)" stroke="url(#a4)" stroke-width="0.9" stroke-linejoin="round"/><polygon points="398.6,565.9 398.6,546.4 417.9,550.5 417.8,570.1" fill="#c8c8c8" stroke="#c8c8c8" stroke-width="0.9" stroke-linejoin="round"/><polygon points="542.1,565.9 534.4,574.3 535.3,554.6 543.0,546.4" fill="#9090e6" stroke="#9090e6" stroke-width="0.9" stroke-linejoin="round"/><polygon points="581.8,593.8 574.7,602.7 575.8,583.0 583.0,574.4" fill="#e18c0e" stroke="#e18c0e" stroke-width="0.9" stroke-linejoin="round"/><polygon points="446.5,449.1 437.4,455.7 457.0,459.1 465.9,452.4" fill="url(#a5)" stroke="url(#a5)" stroke-width="0.9" stroke-linejoin="round"/><polygon points="437.2,359.2 428.0,364.5 447.6,367.2 456.6,361.8" fill="url(#a6)" stroke="url(#a6)" stroke-width="0.9" stroke-linejoin="round"/><polygon points="437.1,593.8 437.3,574.3 457.1,578.6 456.7,598.2" fill="url(#a7)" stroke="url(#a7)" stroke-width="0.9" stroke-linejoin="round"/><polygon points="465.6,589.4 456.7,598.2 457.1,578.6 466.0,570.1" fill="url(#a8)" stroke="url(#a8)" stroke-width="0.9" stroke-linejoin="round"/><polygon points="436.9,495.6 427.7,503.0 447.3,506.7 456.3,499.3" fill="url(#a9)" stroke="url(#a9)" stroke-width="0.9" stroke-linejoin="round"/><polygon points="417.8,570.1 417.9,550.5 437.5,554.6 437.3,574.3" fill="url(#a10)" stroke="url(#a10)" stroke-width="0.9" stroke-linejoin="round"/><polygon points="398.6,546.4 398.6,526.7 418.0,530.6 417.9,550.5" fill="#c87c0c" stroke="#c87c0c" stroke-width="0.9" stroke-linejoin="round"/><polygon points="408.3,519.0 398.6,526.7 418.0,530.6 427.5,522.8" fill="url(#a11)" stroke="url(#a11)" stroke-width="0.9" stroke-linejoin="round"/><polygon points="543.0,546.4 535.3,554.6 536.1,534.7 543.9,526.7" fill="#9090e6" stroke="#9090e6" stroke-width="0.9" stroke-linejoin="round"/><polygon points="573.6,622.2 566.2,631.6 567.3,611.9 574.7,602.7" fill="#e18c0e" stroke="#e18c0e" stroke-width="0.9" stroke-linejoin="round"/><polygon points="456.6,361.8 447.6,367.2 467.6,369.9 476.4,364.5" fill="url(#a12)" stroke="url(#a12)" stroke-width="0.9" stroke-linejoin="round"/><polygon points="583.0,574.4 575.8,583.0 576.9,563.1 584.2,554.6" fill="#e1e1e1" stroke="#e1e1e1" stroke-width="0.9" stroke-linejoin="round"/><polygon points="408.6,361.8 398.9,367.2 418.4,369.9 428.0,364.5" fill="url(#a13)" stroke="url(#a13)" stroke-width="0.9" stroke-linejoin="round"/><polygon points="417.9,550.5 418.0,530.6 437.8,534.6 437.5,554.6" fill="url(#a14)" stroke="url(#a14)" stroke-width="0.9" stroke-linejoin="round"/><polygon points="496.4,626.9 497.0,607.3 517.6,611.9 516.8,631.6" fill="#081878" stroke="#081878" stroke-width="0.9" stroke-linejoin="round"/><polygon points="524.9,622.2 516.8,631.6 517.6,611.9 525.7,602.7" fill="#091b87" stroke="#091b87" stroke-width="0.9" stroke-linejoin="round"/><polygon points="543.9,526.7 536.1,534.7 537.0,514.4 544.8,506.7" fill="#9090e6" stroke="#9090e6" stroke-width="0.9" stroke-linejoin="round"/><polygon points="534.4,574.3 526.5,583.0 527.3,563.1 535.3,554.6" fill="url(#a15)" stroke="url(#a15)" stroke-width="0.9" stroke-linejoin="round"/><polygon points="476.4,364.5 467.6,369.9 487.8,372.7 496.4,367.2" fill="url(#a16)" stroke="url(#a16)" stroke-width="0.9" stroke-linejoin="round"/><polygon points="574.7,602.7 567.3,611.9 568.4,592.0 575.8,583.0" fill="#e1e1e1" stroke="#e1e1e1" stroke-width="0.9" stroke-linejoin="round"/><polygon points="437.4,455.7 428.0,462.5 447.9,466.0 457.0,459.1" fill="url(#a17)" stroke="url(#a17)" stroke-width="0.9" stroke-linejoin="round"/><polygon points="564.5,530.7 557.0,538.7 578.1,542.8 585.3,534.7" fill="url(#a18)" stroke="url(#a18)" stroke-width="0.9" stroke-linejoin="round"/><polygon points="584.2,554.6 576.9,563.1 578.1,542.8 585.3,534.7" fill="#e18c0e" stroke="#e18c0e" stroke-width="0.9" stroke-linejoin="round"/><polygon points="418.0,530.6 418.1,510.5 438.0,514.4 437.8,534.6" fill="url(#a19)" stroke="url(#a19)" stroke-width="0.9" stroke-linejoin="round"/><polygon points="427.7,503.0 418.1,510.5 438.0,514.4 447.3,506.7" fill="url(#a20)" stroke="url(#a20)" stroke-width="0.9" stroke-linejoin="round"/><polygon points="544.8,506.7 537.0,514.4 537.9,493.9 545.8,486.5" fill="url(#a21)" stroke="url(#a21)" stroke-width="0.9" stroke-linejoin="round"/><polygon points="497.0,607.3 497.6,587.5 518.3,592.0 517.6,611.9" fill="url(#a22)" stroke="url(#a22)" stroke-width="0.9" stroke-linejoin="round"/><polygon points="525.7,602.7 517.6,611.9 518.3,592.0 526.5,583.0" fill="#b4b4b4" stroke="#b4b4b4" stroke-width="0.9" stroke-linejoin="round"/><polygon points="535.3,554.6 527.3,563.1 528.1,542.8 536.1,534.7" fill="url(#a23)" stroke="url(#a23)" stroke-width="0.9" stroke-linejoin="round"/><polygon points="496.4,367.2 487.8,372.7 508.4,375.5 516.7,369.9" fill="url(#a24)" stroke="url(#a24)" stroke-width="0.9" stroke-linejoin="round"/><polygon points="428.1,343.5 418.6,348.6 438.6,351.3 447.9,346.0" fill="url(#a25)" stroke="url(#a25)" stroke-width="0.9" stroke-linejoin="round"/><polygon points="566.2,631.6 558.6,641.4 559.7,621.4 567.3,611.9" fill="#e1e1e1" stroke="#e1e1e1" stroke-width="0.9" stroke-linejoin="round"/><polygon points="575.8,583.0 568.4,592.0 569.5,571.8 576.9,563.1" fill="#e18c0e" stroke="#e18c0e" stroke-width="0.9" stroke-linejoin="round"/><polygon points="427.9,583.0 428.1,563.1 448.2,567.4 447.9,587.5" fill="#8080cc" stroke="#8080cc" stroke-width="0.9" stroke-linejoin="round"/><polygon points="398.9,367.2 388.8,372.7 408.6,375.6 418.4,369.9" fill="url(#a26)" stroke="url(#a26)" stroke-width="0.9" stroke-linejoin="round"/><polygon points="576.2,441.9 568.8,448.7 590.2,452.1 597.3,445.3" fill="url(#a27)" stroke="url(#a27)" stroke-width="0.9" stroke-linejoin="round"/><polygon points="596.1,466.0 589.0,473.2 590.2,452.1 597.3,445.3" fill="#091fe6" stroke="#091fe6" stroke-width="0.9" stroke-linejoin="round"/><polygon points="516.7,369.9 508.4,375.5 529.3,378.4 537.4,372.7" fill="url(#a28)" stroke="url(#a28)" stroke-width="0.9" stroke-linejoin="round"/><polygon points="536.1,534.7 528.1,542.8 529.0,522.4 537.0,514.4" fill="url(#a29)" stroke="url(#a29)" stroke-width="0.9" stroke-linejoin="round"/><polygon points="526.5,583.0 518.3,592.0 519.1,571.8 527.3,563.1" fill="url(#a30)" stroke="url(#a30)" stroke-width="0.9" stroke-linejoin="round"/><polygon points="576.2,441.9 568.8,448.7 569.9,427.5 577.3,421.0" fill="url(#a31)" stroke="url(#a31)" stroke-width="0.9" stroke-linejoin="round"/><polygon points="447.9,346.0 438.6,351.3 458.9,354.0 468.0,348.6" fill="url(#a32)" stroke="url(#a32)" stroke-width="0.9" stroke-linejoin="round"/><polygon points="447.9,587.5 448.2,567.4 468.7,571.8 468.3,592.0" fill="#8080cc" stroke="#8080cc" stroke-width="0.9" stroke-linejoin="round"/><polygon points="567.3,611.9 559.7,621.4 560.7,601.2 568.4,592.0" fill="#e18c0e" stroke="#e18c0e" stroke-width="0.9" stroke-linejoin="round"/><polygon points="428.0,462.5 418.4,469.6 438.5,473.2 447.9,466.0" fill="url(#a33)" stroke="url(#a33)" stroke-width="0.9" stroke-linejoin="round"/><polygon points="576.9,563.1 569.5,571.8 570.6,551.3 578.1,542.8" fill="#e1e1e1" stroke="#e1e1e1" stroke-width="0.9" stroke-linejoin="round"/><polygon points="566.6,490.2 559.0,497.7 560.0,476.8 567.7,469.6" fill="url(#a34)" stroke="url(#a34)" stroke-width="0.9" stroke-linejoin="round"/><polygon points="428.1,563.1 428.3,542.8 448.5,547.0 448.2,567.4" fill="#1c1c1c" stroke="#1c1c1c" stroke-width="0.9" stroke-linejoin="round"/><polygon points="537.4,372.7 529.3,378.4 550.5,381.3 558.3,375.5" fill="url(#a35)" stroke="url(#a35)" stroke-width="0.9" stroke-linejoin="round"/><polygon points="537.0,514.4 529.0,522.4 529.8,501.6 537.9,493.9" fill="url(#a36)" stroke="url(#a36)" stroke-width="0.9" stroke-linejoin="round"/><polygon points="468.0,348.6 458.9,354.0 479.5,356.7 488.4,351.3" fill="url(#a37)" stroke="url(#a37)" stroke-width="0.9" stroke-linejoin="round"/><polygon points="398.5,445.3 398.5,424.2 418.6,427.5 418.5,448.7" fill="url(#a38)" stroke="url(#a38)" stroke-width="0.9" stroke-linejoin="round"/><polygon points="408.5,417.9 398.5,424.2 418.6,427.5 428.4,421.0" fill="url(#a39)" stroke="url(#a39)" stroke-width="0.9" stroke-linejoin="round"/><polygon points="468.3,592.0 468.7,571.8 489.5,576.2 488.9,596.6" fill="#c8c8c8" stroke="#c8c8c8" stroke-width="0.9" stroke-linejoin="round"/><polygon points="418.6,348.6 408.7,354.0 428.9,356.7 438.6,351.3" fill="url(#a40)" stroke="url(#a40)" stroke-width="0.9" stroke-linejoin="round"/><polygon points="529.5,646.3 530.3,626.3 551.8,631.2 550.8,651.4" fill="url(#a41)" stroke="url(#a41)" stroke-width="0.9" stroke-linejoin="round"/><polygon points="558.6,641.4 550.8,651.4 551.8,631.2 559.7,621.4" fill="#e18c0e" stroke="#e18c0e" stroke-width="0.9" stroke-linejoin="round"/><polygon points="448.2,567.4 448.5,547.0 469.1,551.3 468.7,571.8" fill="#1c1c1c" stroke="#1c1c1c" stroke-width="0.9" stroke-linejoin="round"/><polygon points="558.0,518.4 550.2,526.4 571.7,530.5 579.3,522.4" fill="url(#a42)" stroke="url(#a42)" stroke-width="0.9" stroke-linejoin="round"/><polygon points="578.1,542.8 570.6,551.3 571.7,530.5 579.3,522.4" fill="#e18c0e" stroke="#e18c0e" stroke-width="0.9" stroke-linejoin="round"/><polygon points="568.4,592.0 560.7,601.2 561.8,580.8 569.5,571.8" fill="#e1e1e1" stroke="#e1e1e1" stroke-width="0.9" stroke-linejoin="round"/><polygon points="428.3,542.8 428.4,522.3 448.9,526.4 448.5,547.0" fill="#8080cc" stroke="#8080cc" stroke-width="0.9" stroke-linejoin="round"/><polygon points="598.6,424.2 591.5,430.8 592.7,409.2 599.9,402.9" fill="#091fe6" stroke="#091fe6" stroke-width="0.9" stroke-linejoin="round"/><polygon points="558.3,375.5 550.5,381.3 572.1,384.3 579.6,378.4" fill="url(#a43)" stroke="url(#a43)" stroke-width="0.9" stroke-linejoin="round"/><polygon points="378.6,399.9 378.5,378.4 398.5,381.4 398.5,402.9" fill="url(#a44)" stroke="url(#a44)" stroke-width="0.9" stroke-linejoin="round"/><polygon points="388.8,372.7 378.5,378.4 398.5,381.4 408.6,375.6" fill="url(#a45)" stroke="url(#a45)" stroke-width="0.9" stroke-linejoin="round"/><polygon points="519.1,571.8 519.9,551.3 541.2,555.6 540.3,576.2" fill="#7a7a7a" stroke="#7a7a7a" stroke-width="0.9" stroke-linejoin="round"/><polygon points="488.4,351.3 479.5,356.7 500.5,359.5 509.1,354.0" fill="url(#a46)" stroke="url(#a46)" stroke-width="0.9" stroke-linejoin="round"/><polygon points="488.9,596.6 489.5,576.2 510.6,580.7 509.9,601.2" fill="#8080cc" stroke="#8080cc" stroke-width="0.9" stroke-linejoin="round"/><polygon points="518.3,592.0 509.9,601.2 510.6,580.7 519.1,571.8" fill="url(#a47)" stroke="url(#a47)" stroke-width="0.9" stroke-linejoin="round"/><polygon points="568.8,448.7 561.1,455.7 582.8,459.2 590.2,452.1" fill="url(#a48)" stroke="url(#a48)" stroke-width="0.9" stroke-linejoin="round"/><polygon points="589.0,473.2 581.6,480.6 582.8,459.2 590.2,452.1" fill="#091fe6" stroke="#091fe6" stroke-width="0.9" stroke-linejoin="round"/><polygon points="568.8,448.7 561.1,455.7 562.2,434.2 569.9,427.5" fill="#0717ae" stroke="#0717ae" stroke-width="0.9" stroke-linejoin="round"/><polygon points="468.7,571.8 469.1,551.3 490.1,555.6 489.5,576.2" fill="#c8c8c8" stroke="#c8c8c8" stroke-width="0.9" stroke-linejoin="round"/><polygon points="579.6,378.4 572.1,384.3 594.0,387.3 601.2,381.3" fill="url(#a49)" stroke="url(#a49)" stroke-width="0.9" stroke-linejoin="round"/><polygon points="599.9,402.9 592.7,409.2 594.0,387.3 601.2,381.3" fill="#091fe6" stroke="#091fe6" stroke-width="0.9" stroke-linejoin="round"/><polygon points="448.5,547.0 448.9,526.4 469.6,530.5 469.1,551.3" fill="#8080cc" stroke="#8080cc" stroke-width="0.9" stroke-linejoin="round"/><polygon points="559.7,621.4 551.8,631.2 552.8,610.8 560.7,601.2" fill="#e1e1e1" stroke="#e1e1e1" stroke-width="0.9" stroke-linejoin="round"/><polygon points="418.4,469.6 408.4,476.8 428.8,480.6 438.5,473.2" fill="url(#a50)" stroke="url(#a50)" stroke-width="0.9" stroke-linejoin="round"/><polygon points="428.4,522.3 428.6,501.6 449.2,505.5 448.9,526.4" fill="url(#a51)" stroke="url(#a51)" stroke-width="0.9" stroke-linejoin="round"/><polygon points="569.5,571.8 561.8,580.8 562.9,560.0 570.6,551.3" fill="#e18c0e" stroke="#e18c0e" stroke-width="0.9" stroke-linejoin="round"/><polygon points="559.0,497.7 551.2,505.5 552.2,484.3 560.0,476.8" fill="url(#a52)" stroke="url(#a52)" stroke-width="0.9" stroke-linejoin="round"/><polygon points="519.9,551.3 520.7,530.5 542.2,534.7 541.2,555.6" fill="url(#a53)" stroke="url(#a53)" stroke-width="0.9" stroke-linejoin="round"/><polygon points="509.1,354.0 500.5,359.5 521.8,362.3 530.2,356.7" fill="url(#a54)" stroke="url(#a54)" stroke-width="0.9" stroke-linejoin="round"/><polygon points="438.8,329.6 429.1,334.7 449.8,337.3 459.3,332.1" fill="url(#a55)" stroke="url(#a55)" stroke-width="0.9" stroke-linejoin="round"/><polygon points="489.5,576.2 490.1,555.6 511.3,560.0 510.6,580.7" fill="#1c1c1c" stroke="#1c1c1c" stroke-width="0.9" stroke-linejoin="round"/><polygon points="519.1,571.8 510.6,580.7 511.3,560.0 519.9,551.3" fill="url(#a56)" stroke="url(#a56)" stroke-width="0.9" stroke-linejoin="round"/><polygon points="469.1,551.3 469.6,530.5 490.7,534.7 490.1,555.6" fill="#8080cc" stroke="#8080cc" stroke-width="0.9" stroke-linejoin="round"/><polygon points="398.5,381.4 398.5,359.5 419.0,362.3 418.8,384.3" fill="url(#a57)" stroke="url(#a57)" stroke-width="0.9" stroke-linejoin="round"/><polygon points="408.7,354.0 398.5,359.5 419.0,362.3 428.9,356.7" fill="url(#a58)" stroke="url(#a58)" stroke-width="0.9" stroke-linejoin="round"/><polygon points="448.9,526.4 449.2,505.5 470.1,509.5 469.6,530.5" fill="url(#a59)" stroke="url(#a59)" stroke-width="0.9" stroke-linejoin="round"/><polygon points="560.7,601.2 552.8,610.8 553.9,590.0 561.8,580.8" fill="#e18c0e" stroke="#e18c0e" stroke-width="0.9" stroke-linejoin="round"/><polygon points="550.2,526.4 542.2,534.7 564.0,539.0 571.7,530.5" fill="url(#a60)" stroke="url(#a60)" stroke-width="0.9" stroke-linejoin="round"/><polygon points="570.6,551.3 562.9,560.0 564.0,539.0 571.7,530.5" fill="#e1e1e1" stroke="#e1e1e1" stroke-width="0.9" stroke-linejoin="round"/><polygon points="530.2,356.7 521.8,362.3 543.5,365.2 551.5,359.5" fill="url(#a61)" stroke="url(#a61)" stroke-width="0.9" stroke-linejoin="round"/><polygon points="591.5,430.8 584.1,437.6 585.3,415.7 592.7,409.2" fill="#091fe6" stroke="#091fe6" stroke-width="0.9" stroke-linejoin="round"/><polygon points="550.2,526.4 542.2,534.7 543.1,513.5 551.2,505.5" fill="url(#a62)" stroke="url(#a62)" stroke-width="0.9" stroke-linejoin="round"/><polygon points="490.1,555.6 490.7,534.7 512.1,539.0 511.3,560.0" fill="#c8c8c8" stroke="#c8c8c8" stroke-width="0.9" stroke-linejoin="round"/><polygon points="519.9,551.3 511.3,560.0 512.1,539.0 520.7,530.5" fill="url(#a63)" stroke="url(#a63)" stroke-width="0.9" stroke-linejoin="round"/><polygon points="408.5,455.7 408.5,434.2 429.2,437.6 429.0,459.2" fill="url(#a64)" stroke="url(#a64)" stroke-width="0.9" stroke-linejoin="round"/><polygon points="552.2,484.3 553.2,462.9 575.2,466.6 574.1,488.2" fill="url(#a65)" stroke="url(#a65)" stroke-width="0.9" stroke-linejoin="round"/><polygon points="561.1,455.7 553.2,462.9 575.2,466.6 582.8,459.2" fill="url(#a66)" stroke="url(#a66)" stroke-width="0.9" stroke-linejoin="round"/><polygon points="581.6,480.6 574.1,488.2 575.2,466.6 582.8,459.2" fill="#091fe6" stroke="#091fe6" stroke-width="0.9" stroke-linejoin="round"/><polygon points="469.6,530.5 470.1,509.5 491.3,513.5 490.7,534.7" fill="url(#a67)" stroke="url(#a67)" stroke-width="0.9" stroke-linejoin="round"/><polygon points="428.8,480.6 429.0,459.2 449.8,462.9 449.5,484.3" fill="url(#a68)" stroke="url(#a68)" stroke-width="0.9" stroke-linejoin="round"/><polygon points="561.1,455.7 553.2,462.9 554.2,441.1 562.2,434.2" fill="url(#a69)" stroke="url(#a69)" stroke-width="0.9" stroke-linejoin="round"/><polygon points="551.5,359.5 543.5,365.2 565.5,368.1 573.3,362.3" fill="url(#a70)" stroke="url(#a70)" stroke-width="0.9" stroke-linejoin="round"/><polygon points="572.1,384.3 564.4,390.4 565.5,368.1 573.3,362.3" fill="url(#a71)" stroke="url(#a71)" stroke-width="0.9" stroke-linejoin="round"/><polygon points="521.9,636.2 522.8,615.6 544.7,620.6 543.7,641.3" fill="#c87c0c" stroke="#c87c0c" stroke-width="0.9" stroke-linejoin="round"/><polygon points="551.8,631.2 543.7,641.3 544.7,620.6 552.8,610.8" fill="#e18c0e" stroke="#e18c0e" stroke-width="0.9" stroke-linejoin="round"/><polygon points="398.2,505.5 398.2,484.3 418.8,488.2 418.7,509.5" fill="#c8c8c8" stroke="#c8c8c8" stroke-width="0.9" stroke-linejoin="round"/><polygon points="408.4,476.8 398.2,484.3 418.8,488.2 428.8,480.6" fill="url(#a72)" stroke="url(#a72)" stroke-width="0.9" stroke-linejoin="round"/><polygon points="572.1,384.3 564.4,390.4 586.6,393.5 594.0,387.3" fill="url(#a73)" stroke="url(#a73)" stroke-width="0.9" stroke-linejoin="round"/><polygon points="592.7,409.2 585.3,415.7 586.6,393.5 594.0,387.3" fill="#091fe6" stroke="#091fe6" stroke-width="0.9" stroke-linejoin="round"/><polygon points="459.7,310.0 450.1,314.9 471.3,317.4 480.6,312.4" fill="#0a22ff" stroke="#0a22ff" stroke-width="0.9" stroke-linejoin="round"/><polygon points="561.8,580.8 553.9,590.0 554.9,569.0 562.9,560.0" fill="#e1e1e1" stroke="#e1e1e1" stroke-width="0.9" stroke-linejoin="round"/><polygon points="388.1,409.2 388.0,387.4 408.6,390.4 408.6,412.5" fill="url(#a74)" stroke="url(#a74)" stroke-width="0.9" stroke-linejoin="round"/><polygon points="398.5,381.4 388.0,387.4 408.6,390.4 418.8,384.3" fill="url(#a75)" stroke="url(#a75)" stroke-width="0.9" stroke-linejoin="round"/><polygon points="551.2,505.5 543.1,513.5 544.1,492.1 552.2,484.3" fill="url(#a76)" stroke="url(#a76)" stroke-width="0.9" stroke-linejoin="round"/><polygon points="419.0,362.3 419.1,340.0 440.0,342.7 439.8,365.2" fill="url(#a77)" stroke="url(#a77)" stroke-width="0.9" stroke-linejoin="round"/><polygon points="429.1,334.7 419.1,340.0 440.0,342.7 449.8,337.3" fill="url(#a78)" stroke="url(#a78)" stroke-width="0.9" stroke-linejoin="round"/><polygon points="490.7,534.7 491.3,513.5 512.9,517.6 512.1,539.0" fill="url(#a79)" stroke="url(#a79)" stroke-width="0.9" stroke-linejoin="round"/><polygon points="429.0,459.2 429.2,437.6 450.2,441.1 449.8,462.9" fill="url(#a80)" stroke="url(#a80)" stroke-width="0.9" stroke-linejoin="round"/><polygon points="449.5,484.3 449.8,462.9 471.0,466.6 470.5,488.2" fill="url(#a81)" stroke="url(#a81)" stroke-width="0.9" stroke-linejoin="round"/><polygon points="480.6,312.4 471.3,317.4 492.9,319.9 501.9,314.8" fill="#0a22ff" stroke="#0a22ff" stroke-width="0.9" stroke-linejoin="round"/><polygon points="418.7,509.5 418.8,488.2 439.7,492.1 439.5,513.5" fill="#c8c8c8" stroke="#c8c8c8" stroke-width="0.9" stroke-linejoin="round"/><polygon points="428.8,480.6 418.8,488.2 439.7,492.1 449.5,484.3" fill="url(#a82)" stroke="url(#a82)" stroke-width="0.9" stroke-linejoin="round"/><polygon points="522.8,615.6 523.6,594.8 545.7,599.6 544.7,620.6" fill="#c8c8c8" stroke="#c8c8c8" stroke-width="0.9" stroke-linejoin="round"/><polygon points="552.8,610.8 544.7,620.6 545.7,599.6 553.9,590.0" fill="#e1e1e1" stroke="#e1e1e1" stroke-width="0.9" stroke-linejoin="round"/><polygon points="522.3,488.2 523.1,466.6 545.1,470.3 544.1,492.1" fill="url(#a83)" stroke="url(#a83)" stroke-width="0.9" stroke-linejoin="round"/><polygon points="552.2,484.3 544.1,492.1 545.1,470.3 553.2,462.9" fill="url(#a84)" stroke="url(#a84)" stroke-width="0.9" stroke-linejoin="round"/><polygon points="533.0,564.5 533.9,543.3 556.0,547.7 554.9,569.0" fill="url(#a85)" stroke="url(#a85)" stroke-width="0.9" stroke-linejoin="round"/><polygon points="542.2,534.7 533.9,543.3 556.0,547.7 564.0,539.0" fill="url(#a86)" stroke="url(#a86)" stroke-width="0.9" stroke-linejoin="round"/><polygon points="562.9,560.0 554.9,569.0 556.0,547.7 564.0,539.0" fill="#e18c0e" stroke="#e18c0e" stroke-width="0.9" stroke-linejoin="round"/><polygon points="512.1,539.0 512.9,517.6 534.8,521.8 533.9,543.3" fill="url(#a87)" stroke="url(#a87)" stroke-width="0.9" stroke-linejoin="round"/><polygon points="542.2,534.7 533.9,543.3 534.8,521.8 543.1,513.5" fill="url(#a88)" stroke="url(#a88)" stroke-width="0.9" stroke-linejoin="round"/><polygon points="584.1,437.6 576.4,444.7 577.6,422.4 585.3,415.7" fill="url(#a89)" stroke="url(#a89)" stroke-width="0.9" stroke-linejoin="round"/><polygon points="429.2,437.6 429.4,415.7 450.5,419.1 450.2,441.1" fill="url(#a90)" stroke="url(#a90)" stroke-width="0.9" stroke-linejoin="round"/><polygon points="449.8,462.9 450.2,441.1 471.5,444.7 471.0,466.6" fill="url(#a91)" stroke="url(#a91)" stroke-width="0.9" stroke-linejoin="round"/><polygon points="470.5,488.2 471.0,466.6 492.5,470.3 491.9,492.1" fill="url(#a92)" stroke="url(#a92)" stroke-width="0.9" stroke-linejoin="round"/><polygon points="501.9,314.8 492.9,319.9 514.8,322.5 523.5,317.3" fill="#0a22ff" stroke="#0a22ff" stroke-width="0.9" stroke-linejoin="round"/><polygon points="439.5,513.5 439.7,492.1 461.0,496.0 460.6,517.6" fill="#c87c0c" stroke="#c87c0c" stroke-width="0.9" stroke-linejoin="round"/><polygon points="449.5,484.3 439.7,492.1 461.0,496.0 470.5,488.2" fill="url(#a93)" stroke="url(#a93)" stroke-width="0.9" stroke-linejoin="round"/><polygon points="408.6,390.4 408.7,368.1 429.8,371.0 429.6,393.5" fill="url(#a94)" stroke="url(#a94)" stroke-width="0.9" stroke-linejoin="round"/><polygon points="419.0,362.3 408.7,368.1 429.8,371.0 439.8,365.2" fill="url(#a95)" stroke="url(#a95)" stroke-width="0.9" stroke-linejoin="round"/><polygon points="440.0,342.7 440.3,319.9 461.8,322.5 461.4,345.4" fill="url(#a96)" stroke="url(#a96)" stroke-width="0.9" stroke-linejoin="round"/><polygon points="450.1,314.9 440.3,319.9 461.8,322.5 471.3,317.4" fill="#0a22ff" stroke="#0a22ff" stroke-width="0.9" stroke-linejoin="round"/><polygon points="523.6,594.8 524.4,573.6 546.7,578.3 545.7,599.6" fill="#c87c0c" stroke="#c87c0c" stroke-width="0.9" stroke-linejoin="round"/><polygon points="533.0,564.5 524.4,573.6 546.7,578.3 554.9,569.0" fill="url(#a97)" stroke="url(#a97)" stroke-width="0.9" stroke-linejoin="round"/><polygon points="553.9,590.0 545.7,599.6 546.7,578.3 554.9,569.0" fill="#e18c0e" stroke="#e18c0e" stroke-width="0.9" stroke-linejoin="round"/><polygon points="585.3,415.7 577.6,422.4 578.9,399.9 586.6,393.5" fill="url(#a98)" stroke="url(#a98)" stroke-width="0.9" stroke-linejoin="round"/><polygon points="522.3,488.2 513.6,496.0 535.7,500.1 544.1,492.1" fill="url(#a99)" stroke="url(#a99)" stroke-width="0.9" stroke-linejoin="round"/><polygon points="543.1,513.5 534.8,521.8 535.7,500.1 544.1,492.1" fill="#e1e1e1" stroke="#e1e1e1" stroke-width="0.9" stroke-linejoin="round"/><polygon points="450.2,441.1 450.5,419.1 472.0,422.4 471.5,444.7" fill="url(#a100)" stroke="url(#a100)" stroke-width="0.9" stroke-linejoin="round"/><polygon points="491.9,492.1 492.5,470.3 514.4,474.1 513.6,496.0" fill="url(#a101)" stroke="url(#a101)" stroke-width="0.9" stroke-linejoin="round"/><polygon points="522.3,488.2 513.6,496.0 514.4,474.1 523.1,466.6" fill="url(#a102)" stroke="url(#a102)" stroke-width="0.9" stroke-linejoin="round"/><polygon points="471.0,466.6 471.5,444.7 493.2,448.3 492.5,470.3" fill="url(#a103)" stroke="url(#a103)" stroke-width="0.9" stroke-linejoin="round"/><polygon points="398.1,441.1 398.1,419.1 419.2,422.5 419.0,444.7" fill="url(#a104)" stroke="url(#a104)" stroke-width="0.9" stroke-linejoin="round"/><polygon points="429.2,437.6 419.0,444.7 419.2,422.5 429.4,415.7" fill="url(#a105)" stroke="url(#a105)" stroke-width="0.9" stroke-linejoin="round"/><polygon points="523.5,317.3 514.8,322.5 537.0,325.1 545.4,319.9" fill="#0a22ff" stroke="#0a22ff" stroke-width="0.9" stroke-linejoin="round"/><polygon points="544.4,342.7 536.1,348.2 537.0,325.1 545.4,319.9" fill="url(#a106)" stroke="url(#a106)" stroke-width="0.9" stroke-linejoin="round"/><polygon points="545.1,470.3 546.1,448.3 568.5,451.9 567.4,474.1" fill="url(#a107)" stroke="url(#a107)" stroke-width="0.9" stroke-linejoin="round"/><polygon points="575.2,466.6 567.4,474.1 568.5,451.9 576.4,444.7" fill="url(#a108)" stroke="url(#a108)" stroke-width="0.9" stroke-linejoin="round"/><polygon points="460.6,517.6 461.0,496.0 482.7,500.1 482.1,521.8" fill="#c87c0c" stroke="#c87c0c" stroke-width="0.9" stroke-linejoin="round"/><polygon points="470.5,488.2 461.0,496.0 482.7,500.1 491.9,492.1" fill="url(#a109)" stroke="url(#a109)" stroke-width="0.9" stroke-linejoin="round"/><polygon points="544.4,342.7 536.1,348.2 558.5,351.1 566.6,345.4" fill="url(#a110)" stroke="url(#a110)" stroke-width="0.9" stroke-linejoin="round"/><polygon points="565.5,368.1 557.4,374.0 558.5,351.1 566.6,345.4" fill="url(#a111)" stroke="url(#a111)" stroke-width="0.9" stroke-linejoin="round"/><polygon points="565.5,368.1 557.4,374.0 580.1,377.1 587.8,371.0" fill="url(#a112)" stroke="url(#a112)" stroke-width="0.9" stroke-linejoin="round"/><polygon points="586.6,393.5 578.9,399.9 580.1,377.1 587.8,371.0" fill="url(#a113)" stroke="url(#a113)" stroke-width="0.9" stroke-linejoin="round"/><polygon points="461.4,345.4 461.8,322.5 483.6,325.1 483.0,348.2" fill="url(#a114)" stroke="url(#a114)" stroke-width="0.9" stroke-linejoin="round"/><polygon points="471.3,317.4 461.8,322.5 483.6,325.1 492.9,319.9" fill="#0a22ff" stroke="#0a22ff" stroke-width="0.9" stroke-linejoin="round"/><polygon points="398.1,419.1 398.1,396.7 419.3,399.9 419.2,422.5" fill="url(#a115)" stroke="url(#a115)" stroke-width="0.9" stroke-linejoin="round"/><polygon points="408.6,390.4 398.1,396.7 419.3,399.9 429.6,393.5" fill="url(#a116)" stroke="url(#a116)" stroke-width="0.9" stroke-linejoin="round"/><polygon points="492.5,470.3 493.2,448.3 515.2,451.9 514.4,474.1" fill="url(#a117)" stroke="url(#a117)" stroke-width="0.9" stroke-linejoin="round"/><polygon points="546.1,448.3 547.1,425.9 569.7,429.4 568.5,451.9" fill="url(#a118)" stroke="url(#a118)" stroke-width="0.9" stroke-linejoin="round"/><polygon points="429.8,371.0 430.0,348.2 451.5,351.1 451.2,374.0" fill="url(#a119)" stroke="url(#a119)" stroke-width="0.9" stroke-linejoin="round"/><polygon points="440.0,342.7 430.0,348.2 451.5,351.1 461.4,345.4" fill="url(#a120)" stroke="url(#a120)" stroke-width="0.9" stroke-linejoin="round"/><polygon points="482.1,521.8 482.7,500.1 504.7,504.2 504.0,526.1" fill="#c8c8c8" stroke="#c8c8c8" stroke-width="0.9" stroke-linejoin="round"/><polygon points="491.9,492.1 482.7,500.1 504.7,504.2 513.6,496.0" fill="url(#a121)" stroke="url(#a121)" stroke-width="0.9" stroke-linejoin="round"/><polygon points="483.0,348.2 483.6,325.1 505.8,327.8 505.0,351.1" fill="url(#a122)" stroke="url(#a122)" stroke-width="0.9" stroke-linejoin="round"/><polygon points="492.9,319.9 483.6,325.1 505.8,327.8 514.8,322.5" fill="#0a22ff" stroke="#0a22ff" stroke-width="0.9" stroke-linejoin="round"/><polygon points="514.4,474.1 515.2,451.9 537.6,455.6 536.6,478.0" fill="url(#a123)" stroke="url(#a123)" stroke-width="0.9" stroke-linejoin="round"/><polygon points="545.1,470.3 536.6,478.0 537.6,455.6 546.1,448.3" fill="url(#a124)" stroke="url(#a124)" stroke-width="0.9" stroke-linejoin="round"/><polygon points="493.2,448.3 493.8,425.9 516.0,429.4 515.2,451.9" fill="url(#a125)" stroke="url(#a125)" stroke-width="0.9" stroke-linejoin="round"/><polygon points="568.5,451.9 569.7,429.4 592.7,432.9 591.4,455.6" fill="#081bcc" stroke="#081bcc" stroke-width="0.9" stroke-linejoin="round"/><polygon points="599.0,448.3 591.4,455.6 592.7,432.9 600.3,425.9" fill="#091fe6" stroke="#091fe6" stroke-width="0.9" stroke-linejoin="round"/><polygon points="547.1,425.9 548.1,403.2 570.9,406.5 569.7,429.4" fill="url(#a126)" stroke="url(#a126)" stroke-width="0.9" stroke-linejoin="round"/><polygon points="504.0,526.1 504.7,504.2 527.1,508.3 526.2,530.4" fill="#c8c8c8" stroke="#c8c8c8" stroke-width="0.9" stroke-linejoin="round"/><polygon points="513.6,496.0 504.7,504.2 527.1,508.3 535.7,500.1" fill="url(#a127)" stroke="url(#a127)" stroke-width="0.9" stroke-linejoin="round"/><polygon points="534.8,521.8 526.2,530.4 527.1,508.3 535.7,500.1" fill="#e1e1e1" stroke="#e1e1e1" stroke-width="0.9" stroke-linejoin="round"/><polygon points="451.2,374.0 451.5,351.1 473.5,353.9 473.0,377.1" fill="url(#a128)" stroke="url(#a128)" stroke-width="0.9" stroke-linejoin="round"/><polygon points="461.4,345.4 451.5,351.1 473.5,353.9 483.0,348.2" fill="url(#a129)" stroke="url(#a129)" stroke-width="0.9" stroke-linejoin="round"/><polygon points="505.0,351.1 505.8,327.8 528.3,330.5 527.4,353.9" fill="url(#a130)" stroke="url(#a130)" stroke-width="0.9" stroke-linejoin="round"/><polygon points="514.8,322.5 505.8,327.8 528.3,330.5 537.0,325.1" fill="#0a22ff" stroke="#0a22ff" stroke-width="0.9" stroke-linejoin="round"/><polygon points="536.1,348.2 527.4,353.9 528.3,330.5 537.0,325.1" fill="url(#a131)" stroke="url(#a131)" stroke-width="0.9" stroke-linejoin="round"/><polygon points="546.1,448.3 537.6,455.6 538.6,432.9 547.1,425.9" fill="url(#a132)" stroke="url(#a132)" stroke-width="0.9" stroke-linejoin="round"/><polygon points="526.5,377.1 527.4,353.9 550.2,356.9 549.1,380.2" fill="url(#a133)" stroke="url(#a133)" stroke-width="0.9" stroke-linejoin="round"/><polygon points="536.1,348.2 527.4,353.9 550.2,356.9 558.5,351.1" fill="url(#a134)" stroke="url(#a134)" stroke-width="0.9" stroke-linejoin="round"/><polygon points="557.4,374.0 549.1,380.2 550.2,356.9 558.5,351.1" fill="url(#a135)" stroke="url(#a135)" stroke-width="0.9" stroke-linejoin="round"/><polygon points="419.3,399.9 419.4,377.1 441.1,380.2 440.8,403.2" fill="url(#a136)" stroke="url(#a136)" stroke-width="0.9" stroke-linejoin="round"/><polygon points="429.8,371.0 419.4,377.1 441.1,380.2 451.2,374.0" fill="url(#a137)" stroke="url(#a137)" stroke-width="0.9" stroke-linejoin="round"/><polygon points="569.7,429.4 570.9,406.5 594.1,409.9 592.7,432.9" fill="#081bcc" stroke="#081bcc" stroke-width="0.9" stroke-linejoin="round"/><polygon points="578.9,399.9 570.9,406.5 594.1,409.9 601.7,403.2" fill="url(#a138)" stroke="url(#a138)" stroke-width="0.9" stroke-linejoin="round"/><polygon points="600.3,425.9 592.7,432.9 594.1,409.9 601.7,403.2" fill="#091fe6" stroke="#091fe6" stroke-width="0.9" stroke-linejoin="round"/><polygon points="548.1,403.2 549.1,380.2 572.1,383.4 570.9,406.5" fill="url(#a139)" stroke="url(#a139)" stroke-width="0.9" stroke-linejoin="round"/><polygon points="557.4,374.0 549.1,380.2 572.1,383.4 580.1,377.1" fill="url(#a140)" stroke="url(#a140)" stroke-width="0.9" stroke-linejoin="round"/><polygon points="578.9,399.9 570.9,406.5 572.1,383.4 580.1,377.1" fill="url(#a141)" stroke="url(#a141)" stroke-width="0.9" stroke-linejoin="round"/><polygon points="461.9,451.9 462.3,429.4 484.4,432.9 483.8,455.6" fill="url(#a142)" stroke="url(#a142)" stroke-width="0.9" stroke-linejoin="round"/><polygon points="493.2,448.3 483.8,455.6 484.4,432.9 493.8,425.9" fill="url(#a143)" stroke="url(#a143)" stroke-width="0.9" stroke-linejoin="round"/><polygon points="473.0,377.1 473.5,353.9 495.8,356.9 495.1,380.2" fill="url(#a144)" stroke="url(#a144)" stroke-width="0.9" stroke-linejoin="round"/><polygon points="483.0,348.2 473.5,353.9 495.8,356.9 505.0,351.1" fill="url(#a145)" stroke="url(#a145)" stroke-width="0.9" stroke-linejoin="round"/><polygon points="547.1,425.9 538.6,432.9 539.5,409.9 548.1,403.2" fill="url(#a146)" stroke="url(#a146)" stroke-width="0.9" stroke-linejoin="round"/><polygon points="440.8,403.2 441.1,380.2 463.2,383.4 462.7,406.5" fill="url(#a147)" stroke="url(#a147)" stroke-width="0.9" stroke-linejoin="round"/><polygon points="451.2,374.0 441.1,380.2 463.2,383.4 473.0,377.1" fill="url(#a148)" stroke="url(#a148)" stroke-width="0.9" stroke-linejoin="round"/><polygon points="495.1,380.2 495.8,356.9 518.5,359.9 517.6,383.4" fill="url(#a149)" stroke="url(#a149)" stroke-width="0.9" stroke-linejoin="round"/><polygon points="505.0,351.1 495.8,356.9 518.5,359.9 527.4,353.9" fill="url(#a150)" stroke="url(#a150)" stroke-width="0.9" stroke-linejoin="round"/><polygon points="526.5,377.1 517.6,383.4 518.5,359.9 527.4,353.9" fill="url(#a151)" stroke="url(#a151)" stroke-width="0.9" stroke-linejoin="round"/><polygon points="408.6,429.4 408.6,406.5 430.5,409.9 430.3,432.9" fill="#081bcc" stroke="#081bcc" stroke-width="0.9" stroke-linejoin="round"/><polygon points="419.3,399.9 408.6,406.5 430.5,409.9 440.8,403.2" fill="url(#a152)" stroke="url(#a152)" stroke-width="0.9" stroke-linejoin="round"/><polygon points="526.5,377.1 517.6,383.4 540.5,386.6 549.1,380.2" fill="url(#a153)" stroke="url(#a153)" stroke-width="0.9" stroke-linejoin="round"/><polygon points="548.1,403.2 539.5,409.9 540.5,386.6 549.1,380.2" fill="url(#a154)" stroke="url(#a154)" stroke-width="0.9" stroke-linejoin="round"/><polygon points="462.7,406.5 463.2,383.4 485.6,386.6 485.0,409.9" fill="url(#a155)" stroke="url(#a155)" stroke-width="0.9" stroke-linejoin="round"/><polygon points="473.0,377.1 463.2,383.4 485.6,386.6 495.1,380.2" fill="url(#a156)" stroke="url(#a156)" stroke-width="0.9" stroke-linejoin="round"/><polygon points="506.1,459.4 506.9,436.6 529.8,440.2 528.9,463.3" fill="url(#a157)" stroke="url(#a157)" stroke-width="0.9" stroke-linejoin="round"/><polygon points="537.6,455.6 528.9,463.3 529.8,440.2 538.6,432.9" fill="#091fe6" stroke="#091fe6" stroke-width="0.9" stroke-linejoin="round"/><polygon points="430.3,432.9 430.5,409.9 452.7,413.4 452.3,436.6" fill="#081bcc" stroke="#081bcc" stroke-width="0.9" stroke-linejoin="round"/><polygon points="440.8,403.2 430.5,409.9 452.7,413.4 462.7,406.5" fill="url(#a158)" stroke="url(#a158)" stroke-width="0.9" stroke-linejoin="round"/><polygon points="485.0,409.9 485.6,386.6 508.4,389.9 507.7,413.4" fill="url(#a159)" stroke="url(#a159)" stroke-width="0.9" stroke-linejoin="round"/><polygon points="495.1,380.2 485.6,386.6 508.4,389.9 517.6,383.4" fill="url(#a160)" stroke="url(#a160)" stroke-width="0.9" stroke-linejoin="round"/><polygon points="506.9,436.6 507.7,413.4 530.7,416.9 529.8,440.2" fill="url(#a161)" stroke="url(#a161)" stroke-width="0.9" stroke-linejoin="round"/><polygon points="538.6,432.9 529.8,440.2 530.7,416.9 539.5,409.9" fill="url(#a162)" stroke="url(#a162)" stroke-width="0.9" stroke-linejoin="round"/><polygon points="452.3,436.6 452.7,413.4 475.2,416.9 474.7,440.2" fill="#081bcc" stroke="#081bcc" stroke-width="0.9" stroke-linejoin="round"/><polygon points="462.7,406.5 452.7,413.4 475.2,416.9 485.0,409.9" fill="url(#a163)" stroke="url(#a163)" stroke-width="0.9" stroke-linejoin="round"/><polygon points="507.7,413.4 508.4,389.9 531.7,393.2 530.7,416.9" fill="url(#a164)" stroke="url(#a164)" stroke-width="0.9" stroke-linejoin="round"/><polygon points="517.6,383.4 508.4,389.9 531.7,393.2 540.5,386.6" fill="url(#a165)" stroke="url(#a165)" stroke-width="0.9" stroke-linejoin="round"/><polygon points="474.7,440.2 475.2,416.9 498.2,420.4 497.5,444.0" fill="#081bcc" stroke="#081bcc" stroke-width="0.9" stroke-linejoin="round"/><polygon points="485.0,409.9 475.2,416.9 498.2,420.4 507.7,413.4" fill="url(#a166)" stroke="url(#a166)" stroke-width="0.9" stroke-linejoin="round"/><polygon points="506.9,436.6 497.5,444.0 498.2,420.4 507.7,413.4" fill="url(#a167)" stroke="url(#a167)" stroke-width="0.9" stroke-linejoin="round"/><polygon points="530.7,416.9 531.7,393.2 555.3,396.6 554.2,420.4" fill="#081bcc" stroke="#081bcc" stroke-width="0.9" stroke-linejoin="round"/><polygon points="540.5,386.6 531.7,393.2 555.3,396.6 563.8,389.8" fill="#0a22ff" stroke="#0a22ff" stroke-width="0.9" stroke-linejoin="round"/><polygon points="562.7,413.4 554.2,420.4 555.3,396.6 563.8,389.8" fill="#091fe6" stroke="#091fe6" stroke-width="0.9" stroke-linejoin="round"/></svg>
<div style="left:564px;top:98px;width:52px;height:519px;background:#2b2b2b;"></div>
<div style="left:572px;top:287px;width:36px;height:35px;background:#3d3d3d;"></div>
<svg style="position:absolute;left:582px;top:118px;" width="14" height="14" viewBox="0 0 14 14"><path d="M3 1 L3 13 L6 10 L8.5 15 L10.3 14.2 L7.8 9.3 L12 9.3 Z" fill="#f0f0f0"/></svg>
<svg style="position:absolute;left:582px;top:154px;" width="14" height="14" viewBox="0 0 14 14"><path d="M7 2 V12 M2 7 H12" stroke="#f0f0f0" stroke-width="2.8"/></svg>
<svg style="position:absolute;left:582px;top:190px;" width="14" height="14" viewBox="0 0 14 14"><path d="M1 12 L5.5 5 H13 L8.5 12 Z" fill="none" stroke="#f0f0f0" stroke-width="1.6"/><path d="M3.2 8.6 L5.5 5 H13 L10.7 8.6 Z" fill="#f0f0f0"/></svg>
<svg style="position:absolute;left:582px;top:226px;" width="14" height="14" viewBox="0 0 14 14"><path d="M13 1.5 C11 2.5 7.5 6 6.5 8 L8 9.5 C10 8.5 13 5 13.5 2 Z" fill="#f0f0f0"/><path d="M5.5 9 C3.5 9 3 10.5 2.8 12 C2.6 13 1.8 13.2 1 13.2 C3 14.5 6.5 14 7 11 Z" fill="#f0f0f0"/></svg>
<svg style="position:absolute;left:582px;top:262px;" width="14" height="14" viewBox="0 0 14 14"><path d="M10.5 1.5 C11.5 0.5 13.5 2.5 12.5 3.5 L11 5 L11.8 5.8 L10.8 6.8 L7.2 3.2 L8.2 2.2 L9 3 Z" fill="#f0f0f0"/><path d="M7.5 4.5 L2.5 9.5 L1.8 12.2 L4.5 11.5 L9.5 6.5" fill="none" stroke="#f0f0f0" stroke-width="1.4"/></svg>
<svg style="position:absolute;left:582px;top:298px;" width="14" height="14" viewBox="0 0 14 14"><path d="M7 2 C5 5 3.6 6.8 3.6 9 C3.6 11 5.2 12.5 7 12.5 C8.8 12.5 10.4 11 10.4 9 C10.4 6.8 9 5 7 2 Z" fill="#f0f0f0"/></svg>
<svg style="position:absolute;left:582px;top:334px;" width="14" height="14" viewBox="0 0 14 14"><rect x="1.5" y="1.5" width="11" height="11" rx="2" fill="#f0f0f0"/><path d="M4 10 L4.4 8.3 L8.8 3.9 L10.1 5.2 L5.7 9.6 Z" fill="#2b2b2b"/></svg>
<svg style="position:absolute;left:582px;top:370px;" width="14" height="14" viewBox="0 0 14 14"><path d="M7 1 L9.5 3.8 H7.9 V6.1 H10.2 V4.5 L13 7 L10.2 9.5 V7.9 H7.9 V10.2 H9.5 L7 13 L4.5 10.2 H6.1 V7.9 H3.8 V9.5 L1 7 L3.8 4.5 V6.1 H6.1 V3.8 H4.5 Z" fill="#f0f0f0"/></svg>
<svg style="position:absolute;left:582px;top:406px;" width="14" height="14" viewBox="0 0 14 14"><rect x="1.5" y="1.5" width="11" height="11" rx="2" fill="#f0f0f0"/><path d="M7 4 V10 M4 7 H10" stroke="#2b2b2b" stroke-width="1.8"/></svg>
<svg style="position:absolute;left:582px;top:442px;" width="14" height="14" viewBox="0 0 14 14"><rect x="1.5" y="1.5" width="11" height="11" rx="2" fill="#f0f0f0"/><path d="M4 7 H10" stroke="#2b2b2b" stroke-width="1.8"/></svg>
<div style="left:572px;top:358px;width:36px;height:1px;background:#141414;"></div>
<div style="left:572px;top:394px;width:36px;height:1px;background:#141414;"></div>
<div style="left:572px;top:466px;width:36px;height:1px;background:#141414;"></div>
<div style="left:572px;top:467px;width:36px;height:35px;background:#3a3a3a;border-radius:5px"></div>
<div style="left:572px;top:503px;width:36px;height:35px;background:#3a3a3a;border-radius:5px"></div>
<div class="t" style="left:585px;top:513px;color:#8c8c8c;">X</div>
<div style="left:572px;top:539px;width:36px;height:35px;background:#3a3a3a;border-radius:5px"></div>
<div class="t" style="left:585px;top:549px;color:#8c8c8c;">Y</div>
<div style="left:572px;top:575px;width:36px;height:35px;background:#3a3a3a;border-radius:5px"></div>
<div class="t" style="left:585px;top:585px;color:#8c8c8c;">Z</div>
<svg style="position:absolute;left:582px;top:478px;" width="14" height="14" viewBox="0 0 14 14"><path d="M7 1 L9.5 3.8 H7.9 V6.1 H10.2 V4.5 L13 7 L10.2 9.5 V7.9 H7.9 V10.2 H9.5 L7 13 L4.5 10.2 H6.1 V7.9 H3.8 V9.5 L1 7 L3.8 4.5 V6.1 H6.1 V3.8 H4.5 Z" fill="#f0f0f0"/></svg>
<div style="left:1497px;top:31px;width:82px;height:28px;background:#1b1b1b;border-radius:6px 6px 0 0;"></div>
<div style="left:1583px;top:31px;width:81px;height:28px;background:#1b1b1b;border-radius:6px 6px 0 0;"></div>
<div style="left:1668px;top:31px;width:82px;height:28px;background:#2b2b2b;border-radius:6px 6px 0 0;"></div>
<div style="left:1754px;top:31px;width:81px;height:28px;background:#1b1b1b;border-radius:6px 6px 0 0;"></div>
<div style="left:1839px;top:31px;width:81px;height:28px;background:#1b1b1b;border-radius:6px 6px 0 0;"></div>
<div style="left:1497px;top:59px;width:423px;height:587px;background:#2b2b2b;"></div>
<div class="t" style="left:1509px;top:38px;color:#e6e6e6;">Vulkan<span style="letter-spacing:-4px">...</span></div>
<svg style="position:absolute;left:1594px;top:35px;" width="20" height="20" viewBox="0 0 20 20"><ellipse cx="10" cy="10.5" rx="5" ry="6" fill="none" stroke="#bdbdbd" stroke-width="1.2"/><path d="M7 4.5 C7 2.5 13 2.5 13 4.5 M7.5 8 L12.5 13 M12.5 8 L7.5 13 M2.5 10.5 H5 M15 10.5 H17.5 M3 16.5 L6 14.5 M17 16.5 L14 14.5 M3.5 5 L6 6.5 M16.5 5 L14 6.5" fill="none" stroke="#bdbdbd" stroke-width="1.1"/></svg>
<div class="t" style="left:1623px;top:38px;color:#e6e6e6;">De<span style="letter-spacing:-4px">...</span></div>
<svg style="position:absolute;left:1680px;top:36px;" width="18" height="18" viewBox="0 0 18 18"><path d="M3 2 V16 M9 2 V16 M15 2 V16" stroke="#bdbdbd" stroke-width="1.2"/><path d="M1 11 H5 M7 5 H11 M13 10 H17" stroke="#bdbdbd" stroke-width="2"/></svg>
<div class="t" style="left:1709px;top:38px;color:#e6e6e6;">Ins<span style="letter-spacing:-4px">...</span></div>
<div class="t" style="left:1767px;top:38px;color:#e6e6e6;">Enviro<span style="letter-spacing:-4px">...</span></div>
<div class="t" style="left:1851px;top:38px;color:#e6e6e6;">Chunk<span style="letter-spacing:-4px">...</span></div>
<div style="left:1505px;top:68px;width:406px;height:26px;background:#1e1e1e;border-radius:5px"></div>
<div class="t" style="left:1513px;top:73px;color:#e6e6e6;">Sky</div>
<div class="t" style="left:1538px;top:102px;color:#e6e6e6;">Tag</div>
<div class="t" style="left:1538px;top:134px;color:#e6e6e6;">Layer</div>
<div style="left:1646px;top:100px;width:261px;height:26px;background:#424242;border-radius:5px"></div>
<div class="t" style="left:1654px;top:106px;color:#e6e6e6;">Untagged</div>
<svg style="position:absolute;left:1886px;top:107px;" width="14" height="12" viewBox="0 0 14 12"><polygon points="0.5,0.5 13.5,0.5 7,11" fill="#f2f2f2"/></svg>
<div style="left:1646px;top:132px;width:261px;height:26px;background:#424242;border-radius:5px"></div>
<div class="t" style="left:1654px;top:138px;color:#e6e6e6;">Default</div>
<svg style="position:absolute;left:1886px;top:139px;" width="14" height="12" viewBox="0 0 14 12"><polygon points="0.5,0.5 13.5,0.5 7,11" fill="#f2f2f2"/></svg>
<div style="left:1501px;top:164px;width:415px;height:26px;background:#3d3d3d;border-radius:5px"></div>
<svg style="position:absolute;left:1516px;top:171px;" width="13" height="11" viewBox="0 0 13 11"><polygon points="0.5,0.5 12.5,0.5 6.5,10.5" fill="#f2f2f2"/></svg>
<div class="t" style="left:1576px;top:170px;color:#e6e6e6;">Transform</div>
<svg style="position:absolute;left:1548px;top:168px;" width="16" height="16" viewBox="0 0 16 16"><path d="M8 2 V9" stroke="#3bb3c7" stroke-width="1.6"/><path d="M8 9 L2.5 12.5" stroke="#a6b02a" stroke-width="1.6"/><path d="M8 9 L14 12.5" stroke="#d23a3a" stroke-width="1.6"/><circle cx="8" cy="9" r="1.2" fill="#eee"/></svg>
<div class="t" style="left:1538px;top:198px;color:#e6e6e6;">Position</div>
<div style="left:1672px;top:196px;width:58px;height:26px;background:#1f1f1f;border-radius:5px"></div>
<div style="left:1646px;top:196px;width:26px;height:26px;background:#c8192e;border-radius:5px"></div>
<div class="t" style="left:1654px;top:202px;color:#f4f4f4;">X</div>
<div class="t" style="left:1678px;top:202px;color:#e6e6e6;">0.000</div>
<div style="left:1760px;top:196px;width:58px;height:26px;background:#1f1f1f;border-radius:5px"></div>
<div style="left:1734px;top:196px;width:26px;height:26px;background:#2ea84e;border-radius:5px"></div>
<div class="t" style="left:1742px;top:202px;color:#f4f4f4;">Y</div>
<div class="t" style="left:1766px;top:202px;color:#e6e6e6;">0.000</div>
<div style="left:1849px;top:196px;width:58px;height:26px;background:#1f1f1f;border-radius:5px"></div>
<div style="left:1823px;top:196px;width:26px;height:26px;background:#1c3fd0;border-radius:5px"></div>
<div class="t" style="left:1831px;top:202px;color:#f4f4f4;">Z</div>
<div class="t" style="left:1855px;top:202px;color:#e6e6e6;">0.000</div>
<div class="t" style="left:1538px;top:230px;color:#e6e6e6;">Rotation</div>
<div style="left:1672px;top:228px;width:58px;height:26px;background:#1f1f1f;border-radius:5px"></div>
<div style="left:1646px;top:228px;width:26px;height:26px;background:#c8192e;border-radius:5px"></div>
<div class="t" style="left:1654px;top:234px;color:#f4f4f4;">X</div>
<div class="t" style="left:1678px;top:234px;color:#e6e6e6;">0.000</div>
<div style="left:1760px;top:228px;width:58px;height:26px;background:#1f1f1f;border-radius:5px"></div>
<div style="left:1734px;top:228px;width:26px;height:26px;background:#2ea84e;border-radius:5px"></div>
<div class="t" style="left:1742px;top:234px;color:#f4f4f4;">Y</div>
<div class="t" style="left:1766px;top:234px;color:#e6e6e6;">0.000</div>
<div style="left:1849px;top:228px;width:58px;height:26px;background:#1f1f1f;border-radius:5px"></div>
<div style="left:1823px;top:228px;width:26px;height:26px;background:#1c3fd0;border-radius:5px"></div>
<div class="t" style="left:1831px;top:234px;color:#f4f4f4;">Z</div>
<div class="t" style="left:1855px;top:234px;color:#e6e6e6;">0.000</div>
<div class="t" style="left:1538px;top:262px;color:#e6e6e6;">Scale</div>
<div style="left:1672px;top:260px;width:58px;height:26px;background:#1f1f1f;border-radius:5px"></div>
<div style="left:1646px;top:260px;width:26px;height:26px;background:#c8192e;border-radius:5px"></div>
<div class="t" style="left:1654px;top:266px;color:#f4f4f4;">X</div>
<div class="t" style="left:1678px;top:266px;color:#e6e6e6;">1.000</div>
<div style="left:1760px;top:260px;width:58px;height:26px;background:#1f1f1f;border-radius:5px"></div>
<div style="left:1734px;top:260px;width:26px;height:26px;background:#2ea84e;border-radius:5px"></div>
<div class="t" style="left:1742px;top:266px;color:#f4f4f4;">Y</div>
<div class="t" style="left:1766px;top:266px;color:#e6e6e6;">1.000</div>
<div style="left:1849px;top:260px;width:58px;height:26px;background:#1f1f1f;border-radius:5px"></div>
<div style="left:1823px;top:260px;width:26px;height:26px;background:#1c3fd0;border-radius:5px"></div>
<div class="t" style="left:1831px;top:266px;color:#f4f4f4;">Z</div>
<div class="t" style="left:1855px;top:266px;color:#e6e6e6;">1.000</div>
<div style="left:1501px;top:292px;width:415px;height:26px;background:#3d3d3d;border-radius:5px"></div>
<svg style="position:absolute;left:1516px;top:299px;" width="13" height="11" viewBox="0 0 13 11"><polygon points="0.5,0.5 12.5,0.5 6.5,10.5" fill="#f2f2f2"/></svg>
<div class="t" style="left:1547px;top:298px;color:#e6e6e6;">Mesh</div>
<div class="t" style="left:1538px;top:326px;color:#e6e6e6;">Id</div>
<div class="t" style="left:1646px;top:326px;color:#e6e6e6;">__sky_sphere_r1_d3</div>
<div class="t" style="left:1538px;top:350px;color:#e6e6e6;">Vertices</div>
<div class="t" style="left:1646px;top:350px;color:#e6e6e6;">1536</div>
<div class="t" style="left:1538px;top:374px;color:#e6e6e6;">Indices</div>
<div class="t" style="left:1646px;top:374px;color:#e6e6e6;">0</div>
<div style="left:1501px;top:396px;width:415px;height:26px;background:#3d3d3d;border-radius:5px"></div>
<svg style="position:absolute;left:1516px;top:403px;" width="13" height="11" viewBox="0 0 13 11"><polygon points="0.5,0.5 12.5,0.5 6.5,10.5" fill="#f2f2f2"/></svg>
<div class="t" style="left:1547px;top:402px;color:#e6e6e6;">Material</div>
<div class="t" style="left:1538px;top:430px;color:#e6e6e6;">Id</div>
<div class="t" style="left:1646px;top:430px;color:#e6e6e6;">__sky.mtl</div>
<div class="t" style="left:1538px;top:454px;color:#e6e6e6;">Blending</div>
<div class="t" style="left:1538px;top:478px;color:#e6e6e6;">Depth test</div>
<div class="t" style="left:1538px;top:502px;color:#e6e6e6;">Topology</div>
<div class="t" style="left:1646px;top:502px;color:#e6e6e6;">Triangle</div>
<div style="left:1647px;top:457px;width:11px;height:11px;box-sizing:border-box;border:1.3px solid #d8d8d8;border-radius:2px"></div>
<div style="left:1647px;top:481px;width:11px;height:11px;box-sizing:border-box;border:1.3px solid #d8d8d8;border-radius:2px"></div>
<div style="left:1497px;top:646px;width:423px;height:5px;background:#0f0f0f;"></div>
<div style="left:1497px;top:651px;width:423px;height:28px;background:#0f0f0f;"></div>
<div style="left:1497px;top:651px;width:116px;height:28px;background:#2b2b2b;border-radius:6px 6px 0 0;"></div>
<div style="left:1497px;top:679px;width:423px;height:371px;background:#2b2b2b;"></div>
<svg style="position:absolute;left:1508px;top:656px;" width="18" height="18" viewBox="0 0 18 18"><path d="M3.5 5 A6.5 6.5 0 1 1 2.6 10" fill="none" stroke="#c8c8c8" stroke-width="1.2"/><path d="M1.5 2.5 V6 H5" fill="none" stroke="#c8c8c8" stroke-width="1.2"/><path d="M9 5.5 V9.5 L11.5 12" fill="none" stroke="#c8c8c8" stroke-width="1.2"/></svg>
<div class="t" style="left:1538px;top:657px;color:#e6e6e6;">History</div>
<div class="t" style="left:1618px;top:843px;color:#8a8a8a;">No history available</div>
<div style="left:0px;top:1050px;width:1920px;height:30px;background:#232323;"></div>
<div class="t" style="left:21px;top:1058px;color:#8a8a8a;">Left</div>
<div style="left:80px;top:1050px;width:1px;height:30px;background:#111;"></div>
<div style="left:285px;top:1050px;width:1px;height:30px;background:#111;"></div>
<svg style="position:absolute;left:105px;top:1059px;" width="13" height="13" viewBox="0 0 13 13"><circle cx="6.5" cy="6.5" r="5.8" fill="#e5432a"/><path d="M6.5 3 V8" stroke="#222" stroke-width="1.5"/><circle cx="6.5" cy="10" r="0.9" fill="#222"/></svg>
<div class="t" style="left:127px;top:1058px;color:#e5432a;">0</div>
<svg style="position:absolute;left:162px;top:1058px;" width="15" height="14" viewBox="0 0 15 14"><polygon points="7.5,1 14.5,13.5 0.5,13.5" fill="#f1c40f"/><path d="M7.5 5 V9.5" stroke="#222" stroke-width="1.6"/><circle cx="7.5" cy="11.5" r="0.9" fill="#222"/></svg>
<div class="t" style="left:185px;top:1058px;color:#f1c40f;">3</div>
<svg style="position:absolute;left:221px;top:1059px;" width="13" height="13" viewBox="0 0 13 13"><circle cx="6.5" cy="6.5" r="5.8" fill="#3a8fd6"/><path d="M6.5 5.5 V10" stroke="#fff" stroke-width="1.6"/><circle cx="6.5" cy="3.3" r="0.9" fill="#fff"/></svg>
<div class="t" style="left:243px;top:1058px;color:#3a8fd6;">71</div>
<div class="t" style="left:723px;top:1058px;color:#8a8a8a;">[F]ocus</div>
<div class="t" style="left:804px;top:1058px;color:#8a8a8a;">[G]rid</div>
<svg style="position:absolute;left:878px;top:1057px;" width="12" height="16" viewBox="0 0 12 16"><rect x="1.5" y="1.5" width="9" height="13" rx="4" fill="none" stroke="#8a8a8a" stroke-width="1.3"/><path d="M2 2 H6 V7 H2 Z" fill="#8a8a8a"/></svg>
<div class="t" style="left:904px;top:1058px;color:#8a8a8a;">Fill</div>
<svg style="position:absolute;left:961px;top:1057px;" width="12" height="16" viewBox="0 0 12 16"><rect x="1.5" y="1.5" width="9" height="13" rx="4" fill="none" stroke="#8a8a8a" stroke-width="1.3"/><path d="M6 4 V8" stroke="#8a8a8a" stroke-width="2"/></svg>
<div class="t" style="left:987px;top:1058px;color:#8a8a8a;">Pan</div>
<svg style="position:absolute;left:1034px;top:1057px;" width="12" height="16" viewBox="0 0 12 16"><rect x="1.5" y="1.5" width="9" height="13" rx="4" fill="none" stroke="#8a8a8a" stroke-width="1.3"/><path d="M6 3.5 V11 M4.5 5 L6 3.5 L7.5 5 M4.5 9.5 L6 11 L7.5 9.5" fill="none" stroke="#8a8a8a" stroke-width="1"/></svg>
<div class="t" style="left:1059px;top:1058px;color:#8a8a8a;">Zoom</div>
<svg style="position:absolute;left:1114px;top:1057px;" width="12" height="16" viewBox="0 0 12 16"><rect x="1.5" y="1.5" width="9" height="13" rx="4" fill="none" stroke="#8a8a8a" stroke-width="1.3"/><path d="M6 2 H10 V7 H6 Z" fill="#8a8a8a"/></svg>
<div class="t" style="left:1140px;top:1058px;color:#8a8a8a;">Rotate</div>
<div class="t" style="left:1867px;top:1058px;color:#8a8a8a;">Right</div>
</body></html>
